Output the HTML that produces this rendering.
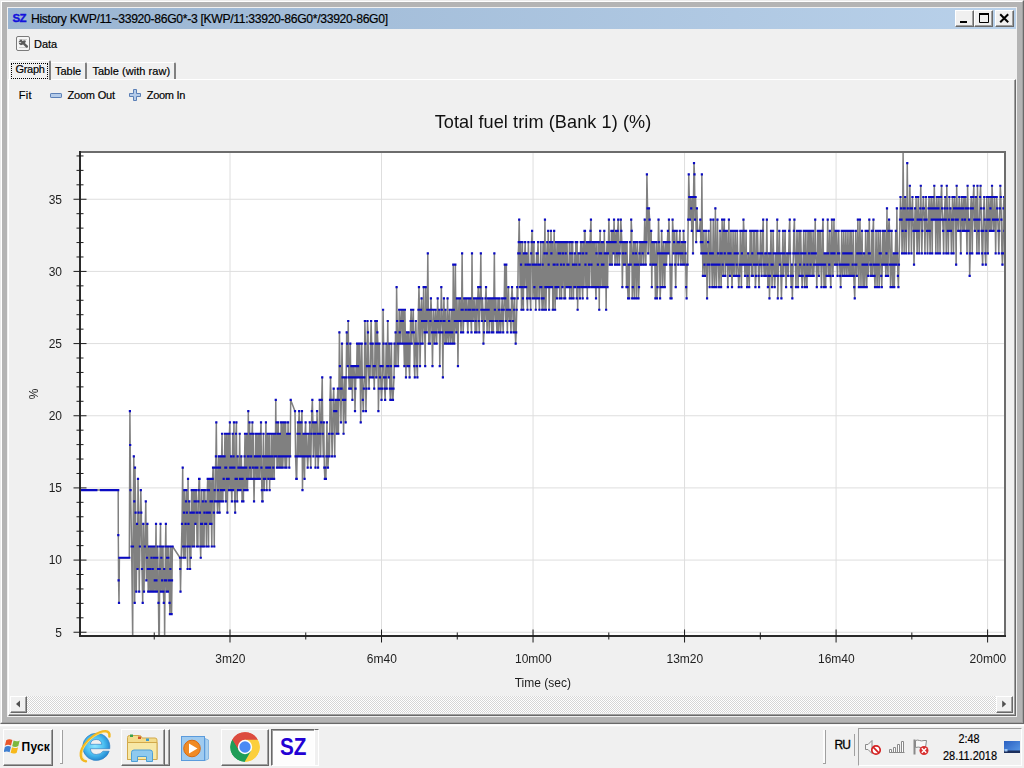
<!DOCTYPE html>
<html lang="en"><head><meta charset="utf-8"><title>History KWP</title>
<style>
html,body{margin:0;padding:0}
body{width:1024px;height:768px;overflow:hidden;background:#f0f0f0;position:relative;font-family:"Liberation Sans",sans-serif;font-size:11px;color:#000}
.abs{position:absolute}
.t{position:absolute;white-space:nowrap;line-height:14px;height:14px;-webkit-text-stroke:0.18px #000}
.raised{position:absolute;box-sizing:border-box;background:#f0f0f0;border:1px solid;border-color:#fff #696969 #696969 #fff;box-shadow:inset -1px -1px 0 #a0a0a0}
.sunken{position:absolute;box-sizing:border-box;border:1px solid;border-color:#a0a0a0 #fff #fff #a0a0a0}
.dither{background-color:#fff;background-image:conic-gradient(#fff 25%,#d6d6d6 0 50%,#fff 0 75%,#d6d6d6 0);background-size:2px 2px}
</style></head><body>
<div class="abs" style="left:0;top:0;width:1024px;height:724px;box-sizing:border-box;border:1px solid;border-color:#ececec #696969 #696969 #ececec;background:#b4b4b4"></div>
<div class="abs" style="left:1px;top:1px;width:1022px;height:722px;box-sizing:border-box;border:1px solid;border-color:#fff #a0a0a0 #a0a0a0 #fff"></div>
<div class="abs" style="left:7px;top:7px;width:1010px;height:710px;background:#f0f0f0"></div>
<div class="abs" style="left:8px;top:8px;width:1008px;height:21px;background:linear-gradient(90deg,#99b4d1,#b9d1ea)"></div>
<div class="t" style="left:12.5px;top:10.5px;font-size:11.5px;font-weight:bold;color:#1212dc;letter-spacing:-0.6px;-webkit-text-stroke:0.35px #1212dc">SZ</div>
<div class="t" style="left:31px;top:11.6px;font-size:12.2px;letter-spacing:-0.33px;color:#000">History KWP/11~33920-86G0*-3 [KWP/11:33920-86G0*/33920-86G0]</div>
<div class="raised" style="left:955px;top:10px;width:19px;height:17px"></div>
<div class="raised" style="left:974px;top:10px;width:19px;height:17px"></div>
<div class="raised" style="left:995px;top:10px;width:19px;height:17px"></div>
<svg class="abs" style="left:955px;top:10px" width="60" height="17" viewBox="0 0 60 17"><rect x="5" y="11" width="7" height="2" fill="#000"/><path d="M24.5 4.5h9v8h-9z" fill="none" stroke="#000"/><rect x="24" y="3" width="10" height="2" fill="#000"/><path d="M45.2 4.2l8 8M53.2 4.2l-8 8" stroke="#000" stroke-width="2" fill="none"/></svg>
<svg class="abs" style="left:15px;top:35px" width="16" height="17" viewBox="0 0 16 17"><rect x="1.5" y="1.5" width="13" height="14" rx="1.5" fill="#f6f6f6" stroke="#7a7a7a"/><path d="M4 4.5h8M4 12.500h8" stroke="#cfcfcf"/><path d="M3.500 6.800l2.200-2.300 1.200.2.300 1.300 1.500-.6 1.600-.2.600 1.600-1 1.300 3.200 3-.3 1.400-1.500.3-3.200-3.200-2.200.6-1.800-1.200-.400-1.700 1.800 1 1-.9z" fill="#5c5c5c"/></svg>
<div class="t" style="left:34px;top:37px;font-size:11px;letter-spacing:-0.05px">Data</div>
<div class="abs" style="left:8px;top:79px;width:1008px;height:637px;box-sizing:border-box;border:1px solid;border-color:#fff #696969 #696969 #fff;box-shadow:inset -1px -1px 0 #a0a0a0"></div>
<div class="abs" style="left:9px;top:60px;width:42px;height:20px;box-sizing:border-box;background:#f0f0f0;border-top:1px solid #fff;border-left:1px solid #fff;border-right:2px solid #808080;border-radius:2px 2px 0 0"></div>
<div class="abs" style="left:11px;top:63px;width:37px;height:16px;box-sizing:border-box;border:1px dotted #000"></div>
<div class="abs" style="left:51px;top:62px;width:36px;height:17px;box-sizing:border-box;border-top:1px solid #fff;border-right:2px solid #808080;border-radius:0 2px 0 0"></div>
<div class="abs" style="left:87px;top:62px;width:89px;height:17px;box-sizing:border-box;border-top:1px solid #fff;border-right:2px solid #808080;border-radius:0 2px 0 0"></div>
<div class="t" style="left:15.6px;top:61.9px;font-size:11px;letter-spacing:-0.35px">Graph</div>
<div class="t" style="left:55px;top:63.9px;font-size:11px;letter-spacing:-0.02px">Table</div>
<div class="t" style="left:92.4px;top:63.9px;font-size:11px;letter-spacing:0.05px">Table (with raw)</div>
<div class="t" style="left:18.8px;top:87.9px;font-size:11px;letter-spacing:0.3px">Fit</div>
<svg class="abs" style="left:49px;top:88px" width="14" height="14" viewBox="0 0 14 14"><rect x="1.5" y="5.5" width="11" height="4" rx=".6" fill="#b4cbe9" stroke="#5b7fb6"/></svg>
<div class="t" style="left:67.5px;top:87.9px;font-size:11px;letter-spacing:-0.2px">Zoom Out</div>
<svg class="abs" style="left:128px;top:88px" width="14" height="14" viewBox="0 0 14 14"><path d="M5.5 1.5h3v4h4v3h-4v4h-3v-4h-4v-3h4z" fill="#b4cbe9" stroke="#5b7fb6" stroke-linejoin="round"/></svg>
<div class="t" style="left:146.8px;top:87.9px;font-size:11px;letter-spacing:-0.3px">Zoom In</div>
<svg class="abs" style="left:0;top:0;will-change:transform" width="1024" height="724" viewBox="0 0 1024 724" font-family="'Liberation Sans', sans-serif">
<rect x="81" y="153" width="923" height="482" fill="#fff"/>
<path d="M81 632.24H1004M81 560.08H1004M81 487.91H1004M81 415.75H1004M81 343.58H1004M81 271.41H1004M81 199.25H1004M230 153V635M381.52 153V635M533.04 153V635M684.56 153V635M836.08 153V635M987.6 153V635" stroke="#dedede" stroke-width="1" fill="none"/>
<clipPath id="pc"><rect x="81" y="151" width="925" height="484.5"/></clipPath>
<g clip-path="url(#pc)"><path d="M80.4 490.11L81.16 490.11L81.92 490.11L82.68 490.11L83.44 490.11L84.2 490.11L84.96 490.11L85.72 490.11L86.48 490.11L87.24 490.11L88 490.11L88.76 490.11L89.52 490.11L90.28 490.11L91.04 490.11L91.8 490.11L92.56 490.11L93.32 490.11L94.08 490.11L94.84 490.11L95.6 490.11L96.36 490.11L100.92 490.11L101.68 490.11L102.44 490.11L103.2 490.11L103.96 490.11L104.72 490.11L105.48 490.11L106.24 490.11L107 490.11L107.76 490.11L108.52 490.11L109.28 490.11L110.04 490.11L110.8 490.11L111.56 490.11L112.32 490.11L113.08 490.11L113.84 490.11L114.6 490.11L115.36 490.11L116.12 490.11L116.88 490.11L117.64 490.11L118.2 490.11L118.3 535.2L118.6 580.3L119 602.84L119.4 557.75L120.2 557.75L120.96 557.75L121.72 557.75L122.48 557.75L123.24 557.75L124 557.75L124.76 557.75L125.52 557.75L126.28 557.75L127.04 557.75L127.8 557.75L128.56 557.75L129.32 557.75L129.9 411.2L130.2 445.02L130.6 490.11L131.6 546.48L132.7 640L133 546.48L133.8 456.29L134.3 501.39L134.7 602.84L135 467.57L135.6 512.66L136.3 591.57L137 523.93L137.5 569.02L138 478.84L138.6 512.66L139.2 591.57L139.9 546.48L140.8 490.11L141.3 512.66L142 569.02L142.7 602.84L143.3 523.93L144 591.57L144.8 546.48L145.8 501.39L146.4 580.3L147 557.75L147.41 523.93L147.82 569.02L148.23 591.57L148.64 569.02L149.05 546.48L149.46 569.02L149.87 591.57L150.28 569.02L150.69 546.48L151.1 591.57L151.51 557.75L151.92 546.48L152.33 591.57L152.74 569.02L153.15 546.48L153.56 591.57L153.97 557.75L154.38 546.48L154.79 580.3L155.2 591.57L155.61 557.75L156.02 523.93L156.43 580.3L156.84 591.57L157.25 557.75L157.66 546.48L158.07 569.02L158.48 602.84L158.89 640L159.3 640L159.71 569.02L160.12 546.48L160.53 523.93L160.94 591.57L161.35 557.75L161.76 546.48L162.17 580.3L162.58 591.57L162.99 546.48L163.4 591.57L163.81 602.84L164.22 569.02L164.63 640L165.04 580.3L165.45 546.48L165.86 523.93L166.27 580.3L166.68 591.57L167.09 557.75L167.5 546.48L167.91 591.57L168.32 557.75L168.73 546.48L169.14 580.3L169.55 602.84L169.96 614.12L170.37 569.02L170.78 546.48L171.19 580.3L171.6 614.12L172.01 580.3L172.42 546.48L172.6 546.48L180 557.75L180.2 569.02L180.5 591.57L181.2 557.75L182 523.93L182.7 467.57L183.11 546.48L183.52 557.75L183.93 512.66L184.34 490.11L184.75 546.48L185.16 557.75L185.57 523.93L185.98 501.39L186.39 490.11L186.8 512.66L187.21 546.48L187.62 569.02L188.03 478.84L188.44 523.93L188.85 546.48L189.26 501.39L189.67 546.48L190.08 569.02L190.49 512.66L190.9 557.75L191.31 512.66L191.72 490.11L192.13 512.66L192.54 546.48L192.95 512.66L193.36 490.11L193.77 512.66L194.18 546.48L194.59 501.39L195 490.11L195.41 523.93L195.82 501.39L196.23 490.11L196.64 512.66L197.05 546.48L197.46 512.66L197.87 546.48L198.28 501.39L198.69 490.11L199.1 478.84L199.51 478.84L199.92 512.66L200.33 546.48L200.74 557.75L201.15 523.93L201.56 490.11L201.97 523.93L202.38 546.48L202.79 501.39L203.2 546.48L203.61 490.11L204.02 546.48L204.43 512.66L204.84 490.11L205.25 523.93L205.66 501.39L206.07 523.93L206.48 546.48L206.89 512.66L207.3 490.11L207.71 478.84L208.12 512.66L208.53 546.48L208.94 490.11L209.35 478.84L209.76 512.66L210.17 523.93L210.58 501.39L210.99 478.84L211.4 523.93L211.81 546.48L212.22 501.39L212.63 478.84L213.04 467.57L213.45 467.57L213.86 512.66L214.27 546.48L214.68 490.11L215.09 501.39L215.5 467.57L215.91 456.29L216.32 422.47L216.73 467.57L217.14 501.39L217.55 512.66L217.96 490.11L218.37 467.57L218.78 456.29L219.19 501.39L219.6 512.66L220.01 467.57L220.42 456.29L220.83 490.11L221.24 501.39L221.65 456.29L222.06 433.75L222.47 490.11L222.88 501.39L223.29 456.29L223.7 478.84L224.11 490.11L224.52 456.29L224.93 433.75L225.34 467.57L225.75 501.39L226.16 467.57L226.57 433.75L226.98 478.84L227.39 512.66L227.8 478.84L228.21 433.75L228.62 478.84L229.03 490.11L229.44 433.75L229.85 422.47L230.26 467.57L230.67 490.11L231.08 456.29L231.49 490.11L231.9 501.39L232.31 467.57L232.72 433.75L233.13 490.11L233.54 456.29L233.95 422.47L234.36 467.57L234.77 501.39L235.18 512.66L235.59 478.84L236 433.75L236.41 422.47L236.82 478.84L237.23 501.39L237.64 456.29L238.05 490.11L238.46 467.57L238.87 490.11L239.28 467.57L239.69 433.75L240.1 478.84L240.51 490.11L240.92 467.57L241.33 456.29L241.74 478.84L242.15 501.39L242.56 478.84L242.97 467.57L243.38 501.39L243.79 467.57L244.2 490.11L244.61 456.29L245.02 433.75L245.43 467.57L245.84 490.11L246.25 467.57L246.66 433.75L247.07 478.84L247.48 490.11L247.89 456.29L248.3 411.2L248.71 456.29L249.12 478.84L249.53 422.47L249.94 467.57L250.35 433.75L250.76 478.84L251.17 456.29L251.58 478.84L251.99 433.75L252.4 422.47L252.81 467.57L253.22 433.75L253.63 478.84L254.04 501.39L254.45 478.84L254.86 456.29L255.27 467.57L255.68 433.75L256.09 478.84L256.5 456.29L256.91 433.75L257.32 467.57L257.73 478.84L258.14 456.29L258.55 433.75L258.96 478.84L259.37 433.75L259.78 478.84L260.19 456.29L260.6 433.75L261.01 422.47L261.42 467.57L261.83 490.11L262.24 501.39L262.65 501.39L263.06 456.29L263.47 433.75L263.88 478.84L264.29 490.11L264.7 456.29L265.11 478.84L265.52 456.29L265.93 422.47L266.34 467.57L266.75 490.11L267.16 456.29L267.57 433.75L267.98 467.57L268.39 478.84L268.8 456.29L269.21 433.75L269.62 490.11L270.03 467.57L270.44 456.29L270.85 478.84L271.26 433.75L271.67 478.84L272.08 456.29L272.49 478.84L272.9 433.75L273.31 467.57L273.72 433.75L274.13 478.84L274.54 456.29L274.95 433.75L275.36 456.29L275.77 399.93L276.18 456.29L276.59 422.47L277 467.57L277.41 433.75L277.82 467.57L278.23 422.47L278.64 456.29L279.05 433.75L279.46 467.57L279.87 433.75L280.28 456.29L280.69 467.57L281.1 422.47L281.51 467.57L281.92 422.47L282.33 456.29L282.74 467.57L283.15 456.29L283.56 422.47L283.97 456.29L284.38 422.47L284.79 456.29L285.2 467.57L285.61 422.47L286.02 456.29L286.43 467.57L286.84 456.29L287.25 433.75L287.66 456.29L288.07 422.47L288.48 456.29L288.89 433.75L289.3 467.57L289.71 433.75L290.2 456.29L290.7 399.93L295 411.2L295.6 456.29L296.3 478.84L296.71 478.84L297.12 456.29L297.53 433.75L297.94 422.47L298.35 456.29L298.76 422.47L299.17 411.2L299.58 433.75L299.99 456.29L300.4 422.47L300.92 456.29L301.44 422.47L301.96 411.2L302.48 490.11L303 456.29L303.52 433.75L304.04 456.29L304.56 478.84L305.08 433.75L305.6 422.47L306.12 456.29L306.64 433.75L307.16 456.29L307.68 467.57L308.2 456.29L308.72 433.75L309.24 456.29L309.76 422.47L310.28 456.29L310.8 467.57L311.32 433.75L311.84 411.2L312.36 399.93L312.88 422.47L313.4 456.29L313.92 433.75L314.44 422.47L314.96 433.75L315.48 467.57L316 422.47L316.52 456.29L317.04 411.2L317.56 433.75L318.08 467.57L318.6 456.29L319.12 433.75L319.64 399.93L320.16 433.75L320.68 456.29L321.2 422.47L321.72 399.93L322.24 377.38L322.76 433.75L323.28 456.29L323.8 422.47L324.32 467.57L324.84 478.84L325.36 467.57L325.88 478.84L326.4 456.29L326.92 422.47L327.44 456.29L327.96 467.57L328.48 456.29L329 433.75L329.52 456.29L330.04 399.93L330.56 377.38L331.08 399.93L331.6 433.75L332.12 456.29L332.64 433.75L333.16 399.93L333.68 388.66L334.2 411.2L334.72 456.29L335.24 411.2L335.76 399.93L336.28 411.2L336.8 433.75L337.32 399.93L337.84 388.66L338.36 433.75L338.88 399.93L339.4 332.29L339.92 366.11L340.44 388.66L340.96 422.47L341.48 388.66L342 343.56L342.52 377.38L343.04 399.93L343.56 433.75L344.08 399.93L344.6 377.38L345.12 399.93L345.64 422.47L346.16 377.38L346.68 332.29L347.2 343.56L347.72 366.11L348.24 321.02L348.76 377.38L349.28 388.66L349.8 377.38L350.32 343.56L350.84 388.66L351.36 366.11L351.88 377.38L352.4 399.93L352.92 366.11L353.44 377.38L353.96 366.11L354.48 377.38L355 411.2L355.52 388.66L356.04 366.11L356.56 377.38L357.08 343.56L357.6 377.38L358.12 366.11L358.64 343.56L359.16 377.38L359.68 343.56L360.2 377.38L360.72 422.47L361.24 377.38L361.76 343.56L362.28 377.38L362.8 399.93L363.32 411.2L363.84 388.66L364.36 377.38L364.88 321.02L365.4 343.56L365.92 411.2L366.44 388.66L366.96 366.11L367.48 321.02L368 332.29L368.52 366.11L369.04 388.66L369.56 366.11L370.08 377.38L370.6 343.56L371.12 321.02L371.64 343.56L372.16 377.38L372.68 343.56L373.2 377.38L373.72 366.11L374.24 388.66L374.76 366.11L375.28 321.02L375.8 343.56L376.32 377.38L376.84 321.02L377.36 332.29L377.88 343.56L378.4 411.2L378.92 388.66L379.44 343.56L379.96 377.38L380.48 366.11L381 388.66L381.52 399.93L382.04 388.66L382.56 366.11L383.08 309.74L383.6 343.56L384.12 377.38L384.64 388.66L385.16 399.93L385.68 377.38L386.2 343.56L386.72 388.66L387.24 366.11L387.76 321.02L388.28 366.11L388.8 377.38L389.32 343.56L389.84 388.66L390.36 399.93L390.88 366.11L391.4 343.56L391.92 388.66L392.44 399.93L392.96 399.93L393.48 388.66L394 377.38L394.52 343.56L395.04 366.11L395.56 332.29L396.08 366.11L396.6 287.2L397.12 321.02L397.64 343.56L398.16 366.11L398.68 343.56L399.2 309.74L399.72 332.29L400.24 343.56L400.76 321.02L401.28 309.74L401.8 309.74L402.32 343.56L402.84 321.02L403.36 309.74L403.88 343.56L404.4 366.11L404.92 309.74L405.44 343.56L405.96 377.38L406.48 343.56L407 332.29L407.52 366.11L408.04 343.56L408.56 332.29L409.08 366.11L409.6 377.38L410.12 343.56L410.64 321.02L411.16 309.74L411.68 343.56L412.2 332.29L412.72 321.02L413.24 309.74L413.76 332.29L414.28 366.11L414.8 377.38L415.32 343.56L415.84 321.02L416.36 343.56L416.88 366.11L417.4 377.38L417.92 343.56L418.44 309.74L418.96 287.2L419.48 309.74L420 366.11L420.52 343.56L421.04 309.74L421.56 298.47L422.08 321.02L422.6 343.56L423.12 321.02L423.64 287.2L424.16 321.02L424.68 332.29L425.2 366.11L425.72 287.2L426.24 321.02L426.76 332.29L427.28 309.74L427.8 253.38L428.32 309.74L428.84 343.56L429.36 309.74L429.88 343.56L430.4 321.02L430.92 298.47L431.44 309.74L431.96 332.29L432.48 366.11L433 332.29L433.52 309.74L434.04 332.29L434.56 343.56L435.08 321.02L435.6 309.74L436.12 332.29L436.64 343.56L437.16 321.02L437.68 298.47L438.2 321.02L438.72 332.29L439.24 309.74L439.76 366.11L440.28 332.29L440.8 321.02L441.32 287.2L441.84 309.74L442.36 332.29L442.88 377.38L443.4 321.02L443.92 298.47L444.44 321.02L444.96 343.56L445.48 309.74L446 332.29L446.52 343.56L447.04 332.29L447.56 298.47L448.08 332.29L448.6 343.56L449.12 321.02L449.64 309.74L450.16 332.29L450.68 343.56L451.2 332.29L451.72 309.74L452.24 332.29L452.76 343.56L453.28 264.65L453.8 309.74L454.32 343.56L454.84 321.02L455.36 264.65L455.88 321.02L456.4 332.29L456.92 298.47L457.44 321.02L457.96 366.11L458.48 321.02L459 298.47L459.52 321.02L460.04 298.47L460.56 321.02L461.08 332.29L461.6 309.74L462.12 253.38L462.64 309.74L463.16 332.29L463.68 321.02L464.2 298.47L464.72 321.02L465.24 298.47L465.76 309.74L466.28 321.02L466.8 298.47L467.32 321.02L467.84 332.29L468.36 309.74L468.88 298.47L469.4 321.02L469.92 309.74L470.44 298.47L470.96 321.02L471.48 332.29L472 253.38L472.52 309.74L473.04 321.02L473.56 309.74L474.08 298.47L474.6 309.74L475.12 332.29L475.64 321.02L476.16 298.47L476.68 332.29L477.2 309.74L477.72 298.47L478.24 287.2L478.76 321.02L479.28 332.29L479.8 298.47L480.32 287.2L480.84 253.38L481.36 309.74L481.88 321.02L482.4 298.47L482.92 309.74L483.44 343.56L483.96 332.29L484.48 309.74L485 321.02L485.52 298.47L486.04 287.2L486.56 309.74L487.08 332.29L487.6 309.74L488.12 298.47L488.64 309.74L489.16 332.29L489.68 298.47L490.2 321.02L490.72 298.47L491.24 321.02L491.76 332.29L492.28 298.47L492.8 321.02L493.32 332.29L493.84 298.47L494.36 253.38L494.88 309.74L495.4 321.02L495.92 298.47L496.44 321.02L496.96 332.29L497.48 321.02L498 298.47L498.52 332.29L499.04 309.74L499.56 298.47L500.08 321.02L500.6 332.29L501.12 321.02L501.64 309.74L502.16 298.47L502.68 321.02L503.2 332.29L503.72 309.74L504.24 298.47L504.76 264.65L505.28 298.47L505.8 321.02L506.32 264.65L506.84 309.74L507.36 332.29L507.88 309.74L508.4 287.2L508.92 309.74L509.44 321.02L509.96 309.74L510.48 321.02L511 332.29L511.52 298.47L512.04 287.2L512.56 298.47L513.08 321.02L513.6 332.29L514.12 309.74L514.64 298.47L515.16 332.29L515.68 343.56L516.2 332.29L516.72 309.74L517.24 287.2L517.76 298.47L518.28 253.38L518.74 242.11L519.2 219.56L519.66 253.38L520.12 287.2L520.58 242.11L521.04 264.65L521.5 309.74L521.96 287.2L522.42 242.11L522.88 298.47L523.34 309.74L523.8 253.38L524.26 287.2L524.72 253.38L525.18 242.11L525.64 264.65L526.1 287.2L526.56 253.38L527.02 298.47L527.48 309.74L527.94 264.65L528.4 242.11L528.86 264.65L529.32 298.47L529.78 264.65L530.24 298.47L530.7 309.74L531.16 253.38L531.62 242.11L532.08 230.83L532.54 264.65L533 298.47L533.46 264.65L533.92 242.11L534.38 287.2L534.84 298.47L535.3 264.65L535.76 309.74L536.22 264.65L536.68 253.38L537.14 298.47L537.6 253.38L538.06 242.11L538.52 264.65L538.98 298.47L539.44 309.74L539.9 264.65L540.36 287.2L540.82 242.11L541.28 287.2L541.74 298.47L542.2 309.74L542.66 264.65L543.12 242.11L543.58 298.47L544.04 309.74L544.5 253.38L544.96 219.56L545.42 287.2L545.88 309.74L546.34 287.2L546.8 253.38L547.26 242.11L547.72 287.2L548.18 230.83L548.64 264.65L549.1 309.74L549.56 287.2L550.02 242.11L550.48 287.2L550.94 230.83L551.4 253.38L551.86 287.2L552.32 242.11L552.78 309.74L553.24 309.74L553.7 264.65L554.16 230.83L554.62 264.65L555.08 309.74L555.54 287.2L556 242.11L556.46 287.2L556.92 298.47L557.38 264.65L557.84 242.11L558.3 287.2L558.76 253.38L559.22 242.11L559.68 298.47L560.14 253.38L560.6 242.11L561.06 264.65L561.52 298.47L561.98 242.11L562.44 287.2L562.9 253.38L563.36 242.11L563.82 264.65L564.28 298.47L564.74 242.11L565.2 298.47L565.66 253.38L566.12 242.11L566.58 287.2L567.04 242.11L567.5 264.65L567.96 287.2L568.42 264.65L568.88 287.2L569.34 242.11L569.8 298.47L570.26 253.38L570.72 287.2L571.18 242.11L571.64 298.47L572.1 253.38L572.56 242.11L573.02 264.65L573.48 298.47L573.94 264.65L574.4 287.2L574.86 253.38L575.32 287.2L575.78 242.11L576.24 264.65L576.7 298.47L577.16 242.11L577.62 309.74L578.08 287.2L578.54 253.38L579 287.2L579.46 264.65L579.92 298.47L580.38 253.38L580.84 242.11L581.3 287.2L581.76 242.11L582.22 287.2L582.68 298.47L583.14 253.38L583.6 242.11L584.06 287.2L584.52 230.83L584.98 230.83L585.44 264.65L585.9 287.2L586.36 253.38L586.82 242.11L587.28 298.47L587.74 242.11L588.2 287.2L588.66 242.11L589.12 264.65L589.58 287.2L590.04 242.11L590.5 230.83L590.96 219.56L591.42 264.65L591.88 287.2L592.34 242.11L592.8 287.2L593.26 242.11L593.72 287.2L594.18 242.11L594.64 287.2L595.1 242.11L595.56 287.2L596.02 298.47L596.48 253.38L596.94 242.11L597.4 287.2L597.86 264.65L598.32 287.2L598.78 242.11L599.24 309.74L599.7 253.38L600.16 230.83L600.62 287.2L601.08 253.38L601.54 242.11L602 264.65L602.46 287.2L602.92 242.11L603.38 264.65L603.84 287.2L604.3 230.83L604.76 253.38L605.22 287.2L605.68 253.38L606.14 309.74L606.6 253.38L607.06 242.11L607.52 287.2L607.98 253.38L608.44 242.11L608.9 219.56L609.36 242.11L609.88 264.65L610.4 242.11L610.92 264.65L611.44 230.83L611.96 264.65L612.48 242.11L613 230.83L613.52 253.38L614.04 219.56L614.56 242.11L615.08 264.65L615.6 242.11L616.12 230.83L616.64 253.38L617.16 264.65L617.68 230.83L618.2 219.56L618.72 253.38L619.24 264.65L619.76 253.38L620.28 242.11L620.8 219.56L621.32 230.83L621.84 242.11L622.36 287.2L622.88 253.38L623.4 242.11L623.92 264.65L624.44 242.11L624.96 264.65L625.48 253.38L626 242.11L626.52 287.2L627.04 242.11L627.56 287.2L628.08 298.47L628.6 264.65L629.12 298.47L629.64 264.65L630.16 242.11L630.68 264.65L631.2 219.56L631.72 230.83L632.24 298.47L632.76 287.2L633.28 253.38L633.8 242.11L634.32 298.47L634.84 264.65L635.36 242.11L635.88 253.38L636.4 298.47L636.92 264.65L637.44 242.11L637.96 264.65L638.48 298.47L639 287.2L639.52 253.38L640.04 242.11L640.56 264.65L641.08 242.11L641.6 264.65L642.12 242.11L642.64 253.38L643.16 242.11L643.68 264.65L644.2 242.11L644.72 219.56L645.24 242.11L645.76 264.65L646.3 242.11L646.9 174.47L647.6 208.29L648.2 253.38L649 208.29L649.6 219.56L650.4 264.65L651.2 230.83L651.8 287.2L652.3 242.11L652.82 264.65L653.34 242.11L653.86 264.65L654.38 242.11L654.9 264.65L655.42 298.47L655.94 264.65L656.46 242.11L656.98 298.47L657.5 287.2L658.02 253.38L658.54 219.56L659.06 242.11L659.58 253.38L660.1 298.47L660.62 287.2L661.14 253.38L661.66 230.83L662.18 253.38L662.7 287.2L663.22 253.38L663.74 242.11L664.26 264.65L664.78 287.2L665.3 253.38L665.82 242.11L666.34 264.65L666.86 253.38L667.38 242.11L667.9 230.83L668.42 253.38L668.94 219.56L669.46 242.11L669.98 264.65L670.5 298.47L671.02 264.65L671.54 298.47L672.06 264.65L672.58 219.56L673.1 230.83L673.62 253.38L674.14 242.11L674.66 230.83L675.18 264.65L675.7 287.2L676.22 253.38L676.74 230.83L677.26 253.38L677.78 242.11L678.3 264.65L678.82 253.38L679.34 242.11L679.86 230.83L680.38 253.38L680.9 264.65L681.42 253.38L681.94 242.11L682.46 253.38L682.98 264.65L683.5 230.83L684.02 242.11L684.54 264.65L685.06 242.11L685.58 253.38L686.1 287.2L686.62 298.47L687.14 264.65L687.6 264.65L688.2 219.56L688.75 174.47L689.3 197.01L689.9 219.56L690.6 197.01L691.2 208.29L691.8 230.83L692.4 197.01L693 253.38L693.5 197.01L694 163.2L694.5 174.47L695 219.56L695.6 197.01L696.2 242.11L696.9 208.29L697.6 230.83L698.3 230.83L699 230.83L699.5 230.83L700.3 219.56L700.82 242.11L701.34 253.38L701.86 174.47L702.38 242.11L702.9 275.93L703.42 253.38L703.94 230.83L704.46 264.65L704.98 275.93L705.5 253.38L706.02 230.83L706.54 253.38L707.06 298.47L707.58 264.65L708.1 242.11L708.62 230.83L709.14 264.65L709.66 287.2L710.18 253.38L710.7 219.56L711.22 253.38L711.74 264.65L712.26 287.2L712.78 253.38L713.3 219.56L713.82 264.65L714.34 287.2L714.86 264.65L715.38 208.29L715.9 264.65L716.42 287.2L716.94 264.65L717.46 219.56L717.98 253.38L718.5 264.65L719.02 287.2L719.54 264.65L720.06 230.83L720.58 253.38L721.1 287.2L721.62 253.38L722.14 219.56L722.66 264.65L723.18 275.93L723.7 230.83L724.22 219.56L724.74 253.38L725.26 275.93L725.78 230.83L726.3 264.65L726.82 230.83L727.34 264.65L727.86 287.2L728.38 253.38L728.9 219.56L729.42 264.65L729.94 275.93L730.46 253.38L730.98 230.83L731.5 264.65L732.02 287.2L732.54 264.65L733.06 230.83L733.58 264.65L734.1 275.93L734.62 253.38L735.14 230.83L735.66 253.38L736.18 275.93L736.7 264.65L737.22 230.83L737.74 253.38L738.26 275.93L738.78 287.2L739.3 275.93L739.82 264.65L740.34 230.83L740.86 264.65L741.38 287.2L741.9 253.38L742.42 230.83L742.94 264.65L743.46 219.56L743.98 230.83L744.5 264.65L745.02 275.93L745.54 264.65L746.06 230.83L746.58 264.65L747.1 287.2L747.62 275.93L748.14 253.38L748.66 264.65L749.18 287.2L749.7 264.65L750.22 230.83L750.74 264.65L751.26 230.83L751.78 275.93L752.3 253.38L752.82 275.93L753.34 230.83L753.86 264.65L754.38 230.83L754.9 264.65L755.42 287.2L755.94 275.93L756.46 230.83L756.98 264.65L757.5 230.83L758.02 253.38L758.54 275.93L759.06 287.2L759.58 264.65L760.1 253.38L760.62 230.83L761.14 264.65L761.66 275.93L762.18 253.38L762.7 230.83L763.22 219.56L763.74 264.65L764.26 275.93L764.78 264.65L765.3 253.38L765.82 275.93L766.34 253.38L766.86 219.56L767.38 264.65L767.9 287.2L768.42 275.93L768.94 253.38L769.46 298.47L769.98 275.93L770.5 253.38L771.02 230.83L771.54 264.65L772.06 287.2L772.58 264.65L773.1 230.83L773.62 253.38L774.14 275.93L774.66 287.2L775.18 275.93L775.7 253.38L776.22 275.93L776.74 253.38L777.26 219.56L777.78 298.47L778.3 275.93L778.82 253.38L779.34 230.83L779.86 264.65L780.38 253.38L780.9 275.93L781.42 298.47L781.94 275.93L782.46 253.38L782.98 230.83L783.5 275.93L784.02 264.65L784.54 253.38L785.06 230.83L785.58 264.65L786.1 287.2L786.62 264.65L787.14 253.38L787.66 264.65L788.18 275.93L788.7 253.38L789.22 230.83L789.74 219.56L790.26 253.38L790.78 275.93L791.3 287.2L791.82 264.65L792.34 298.47L792.86 275.93L793.38 253.38L793.9 230.83L794.42 219.56L794.94 253.38L795.46 264.65L795.98 287.2L796.5 253.38L797.02 230.83L797.54 253.38L798.06 287.2L798.58 253.38L799.1 230.83L799.62 275.93L800.14 264.65L800.66 230.83L801.18 253.38L801.7 275.93L802.22 287.2L802.74 275.93L803.26 253.38L803.78 230.83L804.3 264.65L804.82 287.2L805.34 253.38L805.86 230.83L806.38 275.93L806.9 287.2L807.42 264.65L807.94 230.83L808.46 275.93L808.98 253.38L809.5 230.83L810.02 275.93L810.54 264.65L811.06 230.83L811.58 253.38L812.1 275.93L812.62 253.38L813.14 230.83L813.66 275.93L814.18 264.65L814.7 253.38L815.22 219.56L815.74 253.38L816.26 264.65L816.78 287.2L817.3 264.65L817.82 230.83L818.34 264.65L818.86 275.93L819.38 230.83L819.9 264.65L820.42 230.83L820.94 264.65L821.46 287.2L821.98 264.65L822.5 230.83L823.02 219.56L823.54 264.65L824.06 287.2L824.58 253.38L825.1 264.65L825.62 287.2L826.14 253.38L826.66 275.93L827.18 253.38L827.7 219.56L828.22 253.38L828.74 275.93L829.26 264.65L829.78 230.83L830.3 275.93L830.82 287.2L831.34 253.38L831.86 219.56L832.38 253.38L832.9 275.93L833.42 253.38L833.94 219.56L834.46 253.38L834.98 264.65L835.5 230.83L836.02 264.65L836.54 230.83L837.06 264.65L837.58 275.93L838.1 253.38L838.62 230.83L839.14 253.38L839.66 264.65L840.18 275.93L840.7 287.2L841.22 264.65L841.74 230.83L842.26 264.65L842.78 275.93L843.3 253.38L843.82 230.83L844.34 264.65L844.86 275.93L845.38 253.38L845.9 230.83L846.42 264.65L846.94 275.93L847.46 253.38L847.98 230.83L848.5 264.65L849.02 275.93L849.54 253.38L850.06 230.83L850.58 275.93L851.1 230.83L851.62 253.38L852.14 275.93L852.66 264.65L853.18 230.83L853.7 275.93L854.22 287.2L854.74 298.47L855.26 264.65L855.78 230.83L856.3 264.65L856.82 275.93L857.34 253.38L857.86 219.56L858.38 253.38L858.9 287.2L859.42 253.38L859.94 219.56L860.46 253.38L860.98 287.2L861.5 253.38L862.02 230.83L862.54 264.65L863.06 287.2L863.58 264.65L864.1 253.38L864.62 287.2L865.14 264.65L865.66 230.83L866.18 264.65L866.7 287.2L867.22 264.65L867.74 230.83L868.26 275.93L868.78 253.38L869.3 219.56L869.82 253.38L870.34 264.65L870.86 275.93L871.38 264.65L871.9 230.83L872.42 275.93L872.94 230.83L873.46 219.56L873.98 264.65L874.5 275.93L875.02 287.2L875.54 264.65L876.06 230.83L876.58 264.65L877.1 287.2L877.62 264.65L878.14 230.83L878.66 264.65L879.18 287.2L879.7 253.38L880.22 230.83L880.74 253.38L881.26 275.93L881.78 287.2L882.3 264.65L882.82 230.83L883.34 264.65L883.86 230.83L884.38 264.65L884.9 230.83L885.42 264.65L885.94 275.93L886.46 253.38L886.98 208.29L887.5 264.65L888.02 275.93L888.54 230.83L889.06 219.56L889.58 230.83L890.1 264.65L890.62 287.2L891.14 264.65L891.66 230.83L892.18 264.65L892.7 287.2L893.22 264.65L893.74 253.38L894.26 287.2L894.78 264.65L895.3 253.38L895.82 230.83L896.34 264.65L896.86 208.29L897.38 253.38L897.9 275.93L898.42 287.2L898.94 264.65L899.98 219.56L900.5 197.01L901.02 208.29L901.54 219.56L902.06 253.38L902.58 230.83L903.1 151.92L903.62 208.29L904.14 253.38L904.66 208.29L905.18 197.01L905.7 230.83L906.22 253.38L906.74 219.56L907.26 163.2L907.78 208.29L908.3 219.56L908.82 253.38L909.34 219.56L909.86 185.74L910.38 208.29L910.9 219.56L911.42 253.38L911.94 208.29L912.46 197.01L912.98 219.56L913.5 230.83L914.02 264.65L914.54 230.83L915.06 208.29L915.58 230.83L916.1 197.01L916.62 230.83L917.14 253.38L917.66 219.56L918.18 197.01L918.7 230.83L919.22 253.38L919.74 219.56L920.26 208.29L920.78 185.74L921.3 219.56L921.82 253.38L922.34 230.83L922.86 208.29L923.38 197.01L923.9 208.29L924.42 219.56L924.94 253.38L925.46 219.56L925.98 197.01L926.5 219.56L927.02 230.83L927.54 253.38L928.06 230.83L928.58 208.29L929.1 197.01L929.62 230.83L930.14 253.38L930.66 208.29L931.18 197.01L931.7 219.56L932.22 253.38L932.74 208.29L933.26 197.01L933.78 219.56L934.3 185.74L934.82 208.29L935.34 219.56L935.86 253.38L936.38 208.29L936.9 197.01L937.42 219.56L937.94 253.38L938.46 208.29L938.98 197.01L939.5 219.56L940.02 253.38L940.54 219.56L941.06 197.01L941.58 185.74L942.1 208.29L942.62 219.56L943.14 230.83L943.66 253.38L944.18 219.56L944.7 208.29L945.22 197.01L945.74 219.56L946.26 253.38L946.78 185.74L947.3 208.29L947.82 230.83L948.34 253.38L948.86 219.56L949.38 197.01L949.9 230.83L950.42 208.29L950.94 230.83L951.46 253.38L951.98 219.56L952.5 197.01L953.02 219.56L953.54 253.38L954.06 208.29L954.58 197.01L955.1 208.29L955.62 219.56L956.14 264.65L956.66 185.74L957.18 208.29L957.7 219.56L958.22 230.83L958.74 208.29L959.26 197.01L959.78 208.29L960.3 230.83L960.82 253.38L961.34 208.29L961.86 197.01L962.38 219.56L962.9 230.83L963.42 208.29L963.94 197.01L964.46 230.83L964.98 219.56L965.5 197.01L966.02 208.29L966.54 230.83L967.06 253.38L967.58 185.74L968.1 208.29L968.62 230.83L969.14 219.56L969.66 275.93L970.18 253.38L970.7 208.29L971.22 197.01L971.74 208.29L972.26 253.38L972.78 208.29L973.3 197.01L973.82 185.74L974.34 219.56L974.86 230.83L975.38 219.56L975.9 197.01L976.42 219.56L976.94 253.38L977.46 185.74L977.98 219.56L978.5 230.83L979.02 253.38L979.54 219.56L980.06 197.01L980.58 185.74L981.1 208.29L981.62 230.83L982.14 253.38L982.66 264.65L983.18 230.83L983.7 208.29L984.22 197.01L984.74 219.56L985.26 253.38L985.78 264.65L986.3 230.83L986.82 197.01L987.34 219.56L987.86 253.38L988.38 219.56L988.9 197.01L989.42 219.56L989.94 230.83L990.46 208.29L990.98 197.01L991.5 230.83L992.02 185.74L992.54 197.01L993.06 219.56L993.58 230.83L994.1 219.56L994.62 197.01L995.14 219.56L995.66 253.38L996.18 219.56L996.7 197.01L997.22 208.29L997.74 219.56L998.26 230.83L998.78 253.38L999.3 230.83L999.82 208.29L1000.34 185.74L1000.86 197.01L1001.38 219.56L1001.9 253.38L1002.42 264.65L1002.94 253.38L1003.46 208.29L1003.98 197.01L1004.5 230.83L1005.02 264.65" stroke="#808080" stroke-width="1.5" fill="none" stroke-linejoin="round"/>
<path d="M79.3 489.01h2.2v2.2h-2.2zM80.06 489.01h2.2v2.2h-2.2zM80.82 489.01h2.2v2.2h-2.2zM81.58 489.01h2.2v2.2h-2.2zM82.34 489.01h2.2v2.2h-2.2zM83.1 489.01h2.2v2.2h-2.2zM83.86 489.01h2.2v2.2h-2.2zM84.62 489.01h2.2v2.2h-2.2zM85.38 489.01h2.2v2.2h-2.2zM86.14 489.01h2.2v2.2h-2.2zM86.9 489.01h2.2v2.2h-2.2zM87.66 489.01h2.2v2.2h-2.2zM88.42 489.01h2.2v2.2h-2.2zM89.18 489.01h2.2v2.2h-2.2zM89.94 489.01h2.2v2.2h-2.2zM90.7 489.01h2.2v2.2h-2.2zM91.46 489.01h2.2v2.2h-2.2zM92.22 489.01h2.2v2.2h-2.2zM92.98 489.01h2.2v2.2h-2.2zM93.74 489.01h2.2v2.2h-2.2zM94.5 489.01h2.2v2.2h-2.2zM95.26 489.01h2.2v2.2h-2.2zM99.82 489.01h2.2v2.2h-2.2zM100.58 489.01h2.2v2.2h-2.2zM101.34 489.01h2.2v2.2h-2.2zM102.1 489.01h2.2v2.2h-2.2zM102.86 489.01h2.2v2.2h-2.2zM103.62 489.01h2.2v2.2h-2.2zM104.38 489.01h2.2v2.2h-2.2zM105.14 489.01h2.2v2.2h-2.2zM105.9 489.01h2.2v2.2h-2.2zM106.66 489.01h2.2v2.2h-2.2zM107.42 489.01h2.2v2.2h-2.2zM108.18 489.01h2.2v2.2h-2.2zM108.94 489.01h2.2v2.2h-2.2zM109.7 489.01h2.2v2.2h-2.2zM110.46 489.01h2.2v2.2h-2.2zM111.22 489.01h2.2v2.2h-2.2zM111.98 489.01h2.2v2.2h-2.2zM112.74 489.01h2.2v2.2h-2.2zM113.5 489.01h2.2v2.2h-2.2zM114.26 489.01h2.2v2.2h-2.2zM115.02 489.01h2.2v2.2h-2.2zM115.78 489.01h2.2v2.2h-2.2zM116.54 489.01h2.2v2.2h-2.2zM117.1 489.01h2.2v2.2h-2.2zM117.2 534.1h2.2v2.2h-2.2zM117.5 579.2h2.2v2.2h-2.2zM117.9 601.74h2.2v2.2h-2.2zM118.3 556.65h2.2v2.2h-2.2zM119.1 556.65h2.2v2.2h-2.2zM119.86 556.65h2.2v2.2h-2.2zM120.62 556.65h2.2v2.2h-2.2zM121.38 556.65h2.2v2.2h-2.2zM122.14 556.65h2.2v2.2h-2.2zM122.9 556.65h2.2v2.2h-2.2zM123.66 556.65h2.2v2.2h-2.2zM124.42 556.65h2.2v2.2h-2.2zM125.18 556.65h2.2v2.2h-2.2zM125.94 556.65h2.2v2.2h-2.2zM126.7 556.65h2.2v2.2h-2.2zM127.46 556.65h2.2v2.2h-2.2zM128.22 556.65h2.2v2.2h-2.2zM128.8 410.1h2.2v2.2h-2.2zM129.1 443.92h2.2v2.2h-2.2zM129.5 489.01h2.2v2.2h-2.2zM130.5 545.38h2.2v2.2h-2.2zM131.9 545.38h2.2v2.2h-2.2zM132.7 455.19h2.2v2.2h-2.2zM133.2 500.29h2.2v2.2h-2.2zM133.6 601.74h2.2v2.2h-2.2zM133.9 466.47h2.2v2.2h-2.2zM134.5 511.56h2.2v2.2h-2.2zM135.2 590.47h2.2v2.2h-2.2zM135.9 522.83h2.2v2.2h-2.2zM136.4 567.92h2.2v2.2h-2.2zM136.9 477.74h2.2v2.2h-2.2zM137.5 511.56h2.2v2.2h-2.2zM138.1 590.47h2.2v2.2h-2.2zM138.8 545.38h2.2v2.2h-2.2zM139.7 489.01h2.2v2.2h-2.2zM140.2 511.56h2.2v2.2h-2.2zM140.9 567.92h2.2v2.2h-2.2zM141.6 601.74h2.2v2.2h-2.2zM142.2 522.83h2.2v2.2h-2.2zM142.9 590.47h2.2v2.2h-2.2zM143.7 545.38h2.2v2.2h-2.2zM144.7 500.29h2.2v2.2h-2.2zM145.3 579.2h2.2v2.2h-2.2zM145.9 556.65h2.2v2.2h-2.2zM146.31 522.83h2.2v2.2h-2.2zM146.72 567.92h2.2v2.2h-2.2zM147.13 590.47h2.2v2.2h-2.2zM147.54 567.92h2.2v2.2h-2.2zM147.95 545.38h2.2v2.2h-2.2zM148.36 567.92h2.2v2.2h-2.2zM148.77 590.47h2.2v2.2h-2.2zM149.18 567.92h2.2v2.2h-2.2zM149.59 545.38h2.2v2.2h-2.2zM150 590.47h2.2v2.2h-2.2zM150.41 556.65h2.2v2.2h-2.2zM150.82 545.38h2.2v2.2h-2.2zM151.23 590.47h2.2v2.2h-2.2zM151.64 567.92h2.2v2.2h-2.2zM152.05 545.38h2.2v2.2h-2.2zM152.46 590.47h2.2v2.2h-2.2zM152.87 556.65h2.2v2.2h-2.2zM153.28 545.38h2.2v2.2h-2.2zM153.69 579.2h2.2v2.2h-2.2zM154.1 590.47h2.2v2.2h-2.2zM154.51 556.65h2.2v2.2h-2.2zM154.92 522.83h2.2v2.2h-2.2zM155.33 579.2h2.2v2.2h-2.2zM155.74 590.47h2.2v2.2h-2.2zM156.15 556.65h2.2v2.2h-2.2zM156.56 545.38h2.2v2.2h-2.2zM156.97 567.92h2.2v2.2h-2.2zM157.38 601.74h2.2v2.2h-2.2zM158.61 567.92h2.2v2.2h-2.2zM159.02 545.38h2.2v2.2h-2.2zM159.43 522.83h2.2v2.2h-2.2zM159.84 590.47h2.2v2.2h-2.2zM160.25 556.65h2.2v2.2h-2.2zM160.66 545.38h2.2v2.2h-2.2zM161.07 579.2h2.2v2.2h-2.2zM161.48 590.47h2.2v2.2h-2.2zM161.89 545.38h2.2v2.2h-2.2zM162.3 590.47h2.2v2.2h-2.2zM162.71 601.74h2.2v2.2h-2.2zM163.12 567.92h2.2v2.2h-2.2zM163.94 579.2h2.2v2.2h-2.2zM164.35 545.38h2.2v2.2h-2.2zM164.76 522.83h2.2v2.2h-2.2zM165.17 579.2h2.2v2.2h-2.2zM165.58 590.47h2.2v2.2h-2.2zM165.99 556.65h2.2v2.2h-2.2zM166.4 545.38h2.2v2.2h-2.2zM166.81 590.47h2.2v2.2h-2.2zM167.22 556.65h2.2v2.2h-2.2zM167.63 545.38h2.2v2.2h-2.2zM168.04 579.2h2.2v2.2h-2.2zM168.45 601.74h2.2v2.2h-2.2zM168.86 613.02h2.2v2.2h-2.2zM169.27 567.92h2.2v2.2h-2.2zM169.68 545.38h2.2v2.2h-2.2zM170.09 579.2h2.2v2.2h-2.2zM170.5 613.02h2.2v2.2h-2.2zM170.91 579.2h2.2v2.2h-2.2zM171.32 545.38h2.2v2.2h-2.2zM171.5 545.38h2.2v2.2h-2.2zM178.9 556.65h2.2v2.2h-2.2zM179.1 567.92h2.2v2.2h-2.2zM179.4 590.47h2.2v2.2h-2.2zM180.1 556.65h2.2v2.2h-2.2zM180.9 522.83h2.2v2.2h-2.2zM181.6 466.47h2.2v2.2h-2.2zM182.01 545.38h2.2v2.2h-2.2zM182.42 556.65h2.2v2.2h-2.2zM182.83 511.56h2.2v2.2h-2.2zM183.24 489.01h2.2v2.2h-2.2zM183.65 545.38h2.2v2.2h-2.2zM184.06 556.65h2.2v2.2h-2.2zM184.47 522.83h2.2v2.2h-2.2zM184.88 500.29h2.2v2.2h-2.2zM185.29 489.01h2.2v2.2h-2.2zM185.7 511.56h2.2v2.2h-2.2zM186.11 545.38h2.2v2.2h-2.2zM186.52 567.92h2.2v2.2h-2.2zM186.93 477.74h2.2v2.2h-2.2zM187.34 522.83h2.2v2.2h-2.2zM187.75 545.38h2.2v2.2h-2.2zM188.16 500.29h2.2v2.2h-2.2zM188.57 545.38h2.2v2.2h-2.2zM188.98 567.92h2.2v2.2h-2.2zM189.39 511.56h2.2v2.2h-2.2zM189.8 556.65h2.2v2.2h-2.2zM190.21 511.56h2.2v2.2h-2.2zM190.62 489.01h2.2v2.2h-2.2zM191.03 511.56h2.2v2.2h-2.2zM191.44 545.38h2.2v2.2h-2.2zM191.85 511.56h2.2v2.2h-2.2zM192.26 489.01h2.2v2.2h-2.2zM192.67 511.56h2.2v2.2h-2.2zM193.08 545.38h2.2v2.2h-2.2zM193.49 500.29h2.2v2.2h-2.2zM193.9 489.01h2.2v2.2h-2.2zM194.31 522.83h2.2v2.2h-2.2zM194.72 500.29h2.2v2.2h-2.2zM195.13 489.01h2.2v2.2h-2.2zM195.54 511.56h2.2v2.2h-2.2zM195.95 545.38h2.2v2.2h-2.2zM196.36 511.56h2.2v2.2h-2.2zM196.77 545.38h2.2v2.2h-2.2zM197.18 500.29h2.2v2.2h-2.2zM197.59 489.01h2.2v2.2h-2.2zM198 477.74h2.2v2.2h-2.2zM198.41 477.74h2.2v2.2h-2.2zM198.82 511.56h2.2v2.2h-2.2zM199.23 545.38h2.2v2.2h-2.2zM199.64 556.65h2.2v2.2h-2.2zM200.05 522.83h2.2v2.2h-2.2zM200.46 489.01h2.2v2.2h-2.2zM200.87 522.83h2.2v2.2h-2.2zM201.28 545.38h2.2v2.2h-2.2zM201.69 500.29h2.2v2.2h-2.2zM202.1 545.38h2.2v2.2h-2.2zM202.51 489.01h2.2v2.2h-2.2zM202.92 545.38h2.2v2.2h-2.2zM203.33 511.56h2.2v2.2h-2.2zM203.74 489.01h2.2v2.2h-2.2zM204.15 522.83h2.2v2.2h-2.2zM204.56 500.29h2.2v2.2h-2.2zM204.97 522.83h2.2v2.2h-2.2zM205.38 545.38h2.2v2.2h-2.2zM205.79 511.56h2.2v2.2h-2.2zM206.2 489.01h2.2v2.2h-2.2zM206.61 477.74h2.2v2.2h-2.2zM207.02 511.56h2.2v2.2h-2.2zM207.43 545.38h2.2v2.2h-2.2zM207.84 489.01h2.2v2.2h-2.2zM208.25 477.74h2.2v2.2h-2.2zM208.66 511.56h2.2v2.2h-2.2zM209.07 522.83h2.2v2.2h-2.2zM209.48 500.29h2.2v2.2h-2.2zM209.89 477.74h2.2v2.2h-2.2zM210.3 522.83h2.2v2.2h-2.2zM210.71 545.38h2.2v2.2h-2.2zM211.12 500.29h2.2v2.2h-2.2zM211.53 477.74h2.2v2.2h-2.2zM211.94 466.47h2.2v2.2h-2.2zM212.35 466.47h2.2v2.2h-2.2zM212.76 511.56h2.2v2.2h-2.2zM213.17 545.38h2.2v2.2h-2.2zM213.58 489.01h2.2v2.2h-2.2zM213.99 500.29h2.2v2.2h-2.2zM214.4 466.47h2.2v2.2h-2.2zM214.81 455.19h2.2v2.2h-2.2zM215.22 421.37h2.2v2.2h-2.2zM215.63 466.47h2.2v2.2h-2.2zM216.04 500.29h2.2v2.2h-2.2zM216.45 511.56h2.2v2.2h-2.2zM216.86 489.01h2.2v2.2h-2.2zM217.27 466.47h2.2v2.2h-2.2zM217.68 455.19h2.2v2.2h-2.2zM218.09 500.29h2.2v2.2h-2.2zM218.5 511.56h2.2v2.2h-2.2zM218.91 466.47h2.2v2.2h-2.2zM219.32 455.19h2.2v2.2h-2.2zM219.73 489.01h2.2v2.2h-2.2zM220.14 500.29h2.2v2.2h-2.2zM220.55 455.19h2.2v2.2h-2.2zM220.96 432.65h2.2v2.2h-2.2zM221.37 489.01h2.2v2.2h-2.2zM221.78 500.29h2.2v2.2h-2.2zM222.19 455.19h2.2v2.2h-2.2zM222.6 477.74h2.2v2.2h-2.2zM223.01 489.01h2.2v2.2h-2.2zM223.42 455.19h2.2v2.2h-2.2zM223.83 432.65h2.2v2.2h-2.2zM224.24 466.47h2.2v2.2h-2.2zM224.65 500.29h2.2v2.2h-2.2zM225.06 466.47h2.2v2.2h-2.2zM225.47 432.65h2.2v2.2h-2.2zM225.88 477.74h2.2v2.2h-2.2zM226.29 511.56h2.2v2.2h-2.2zM226.7 477.74h2.2v2.2h-2.2zM227.11 432.65h2.2v2.2h-2.2zM227.52 477.74h2.2v2.2h-2.2zM227.93 489.01h2.2v2.2h-2.2zM228.34 432.65h2.2v2.2h-2.2zM228.75 421.37h2.2v2.2h-2.2zM229.16 466.47h2.2v2.2h-2.2zM229.57 489.01h2.2v2.2h-2.2zM229.98 455.19h2.2v2.2h-2.2zM230.39 489.01h2.2v2.2h-2.2zM230.8 500.29h2.2v2.2h-2.2zM231.21 466.47h2.2v2.2h-2.2zM231.62 432.65h2.2v2.2h-2.2zM232.03 489.01h2.2v2.2h-2.2zM232.44 455.19h2.2v2.2h-2.2zM232.85 421.37h2.2v2.2h-2.2zM233.26 466.47h2.2v2.2h-2.2zM233.67 500.29h2.2v2.2h-2.2zM234.08 511.56h2.2v2.2h-2.2zM234.49 477.74h2.2v2.2h-2.2zM234.9 432.65h2.2v2.2h-2.2zM235.31 421.37h2.2v2.2h-2.2zM235.72 477.74h2.2v2.2h-2.2zM236.13 500.29h2.2v2.2h-2.2zM236.54 455.19h2.2v2.2h-2.2zM236.95 489.01h2.2v2.2h-2.2zM237.36 466.47h2.2v2.2h-2.2zM237.77 489.01h2.2v2.2h-2.2zM238.18 466.47h2.2v2.2h-2.2zM238.59 432.65h2.2v2.2h-2.2zM239 477.74h2.2v2.2h-2.2zM239.41 489.01h2.2v2.2h-2.2zM239.82 466.47h2.2v2.2h-2.2zM240.23 455.19h2.2v2.2h-2.2zM240.64 477.74h2.2v2.2h-2.2zM241.05 500.29h2.2v2.2h-2.2zM241.46 477.74h2.2v2.2h-2.2zM241.87 466.47h2.2v2.2h-2.2zM242.28 500.29h2.2v2.2h-2.2zM242.69 466.47h2.2v2.2h-2.2zM243.1 489.01h2.2v2.2h-2.2zM243.51 455.19h2.2v2.2h-2.2zM243.92 432.65h2.2v2.2h-2.2zM244.33 466.47h2.2v2.2h-2.2zM244.74 489.01h2.2v2.2h-2.2zM245.15 466.47h2.2v2.2h-2.2zM245.56 432.65h2.2v2.2h-2.2zM245.97 477.74h2.2v2.2h-2.2zM246.38 489.01h2.2v2.2h-2.2zM246.79 455.19h2.2v2.2h-2.2zM247.2 410.1h2.2v2.2h-2.2zM247.61 455.19h2.2v2.2h-2.2zM248.02 477.74h2.2v2.2h-2.2zM248.43 421.37h2.2v2.2h-2.2zM248.84 466.47h2.2v2.2h-2.2zM249.25 432.65h2.2v2.2h-2.2zM249.66 477.74h2.2v2.2h-2.2zM250.07 455.19h2.2v2.2h-2.2zM250.48 477.74h2.2v2.2h-2.2zM250.89 432.65h2.2v2.2h-2.2zM251.3 421.37h2.2v2.2h-2.2zM251.71 466.47h2.2v2.2h-2.2zM252.12 432.65h2.2v2.2h-2.2zM252.53 477.74h2.2v2.2h-2.2zM252.94 500.29h2.2v2.2h-2.2zM253.35 477.74h2.2v2.2h-2.2zM253.76 455.19h2.2v2.2h-2.2zM254.17 466.47h2.2v2.2h-2.2zM254.58 432.65h2.2v2.2h-2.2zM254.99 477.74h2.2v2.2h-2.2zM255.4 455.19h2.2v2.2h-2.2zM255.81 432.65h2.2v2.2h-2.2zM256.22 466.47h2.2v2.2h-2.2zM256.63 477.74h2.2v2.2h-2.2zM257.04 455.19h2.2v2.2h-2.2zM257.45 432.65h2.2v2.2h-2.2zM257.86 477.74h2.2v2.2h-2.2zM258.27 432.65h2.2v2.2h-2.2zM258.68 477.74h2.2v2.2h-2.2zM259.09 455.19h2.2v2.2h-2.2zM259.5 432.65h2.2v2.2h-2.2zM259.91 421.37h2.2v2.2h-2.2zM260.32 466.47h2.2v2.2h-2.2zM260.73 489.01h2.2v2.2h-2.2zM261.14 500.29h2.2v2.2h-2.2zM261.55 500.29h2.2v2.2h-2.2zM261.96 455.19h2.2v2.2h-2.2zM262.37 432.65h2.2v2.2h-2.2zM262.78 477.74h2.2v2.2h-2.2zM263.19 489.01h2.2v2.2h-2.2zM263.6 455.19h2.2v2.2h-2.2zM264.01 477.74h2.2v2.2h-2.2zM264.42 455.19h2.2v2.2h-2.2zM264.83 421.37h2.2v2.2h-2.2zM265.24 466.47h2.2v2.2h-2.2zM265.65 489.01h2.2v2.2h-2.2zM266.06 455.19h2.2v2.2h-2.2zM266.47 432.65h2.2v2.2h-2.2zM266.88 466.47h2.2v2.2h-2.2zM267.29 477.74h2.2v2.2h-2.2zM267.7 455.19h2.2v2.2h-2.2zM268.11 432.65h2.2v2.2h-2.2zM268.52 489.01h2.2v2.2h-2.2zM268.93 466.47h2.2v2.2h-2.2zM269.34 455.19h2.2v2.2h-2.2zM269.75 477.74h2.2v2.2h-2.2zM270.16 432.65h2.2v2.2h-2.2zM270.57 477.74h2.2v2.2h-2.2zM270.98 455.19h2.2v2.2h-2.2zM271.39 477.74h2.2v2.2h-2.2zM271.8 432.65h2.2v2.2h-2.2zM272.21 466.47h2.2v2.2h-2.2zM272.62 432.65h2.2v2.2h-2.2zM273.03 477.74h2.2v2.2h-2.2zM273.44 455.19h2.2v2.2h-2.2zM273.85 432.65h2.2v2.2h-2.2zM274.26 455.19h2.2v2.2h-2.2zM274.67 398.83h2.2v2.2h-2.2zM275.08 455.19h2.2v2.2h-2.2zM275.49 421.37h2.2v2.2h-2.2zM275.9 466.47h2.2v2.2h-2.2zM276.31 432.65h2.2v2.2h-2.2zM276.72 466.47h2.2v2.2h-2.2zM277.13 421.37h2.2v2.2h-2.2zM277.54 455.19h2.2v2.2h-2.2zM277.95 432.65h2.2v2.2h-2.2zM278.36 466.47h2.2v2.2h-2.2zM278.77 432.65h2.2v2.2h-2.2zM279.18 455.19h2.2v2.2h-2.2zM279.59 466.47h2.2v2.2h-2.2zM280 421.37h2.2v2.2h-2.2zM280.41 466.47h2.2v2.2h-2.2zM280.82 421.37h2.2v2.2h-2.2zM281.23 455.19h2.2v2.2h-2.2zM281.64 466.47h2.2v2.2h-2.2zM282.05 455.19h2.2v2.2h-2.2zM282.46 421.37h2.2v2.2h-2.2zM282.87 455.19h2.2v2.2h-2.2zM283.28 421.37h2.2v2.2h-2.2zM283.69 455.19h2.2v2.2h-2.2zM284.1 466.47h2.2v2.2h-2.2zM284.51 421.37h2.2v2.2h-2.2zM284.92 455.19h2.2v2.2h-2.2zM285.33 466.47h2.2v2.2h-2.2zM285.74 455.19h2.2v2.2h-2.2zM286.15 432.65h2.2v2.2h-2.2zM286.56 455.19h2.2v2.2h-2.2zM286.97 421.37h2.2v2.2h-2.2zM287.38 455.19h2.2v2.2h-2.2zM287.79 432.65h2.2v2.2h-2.2zM288.2 466.47h2.2v2.2h-2.2zM288.61 432.65h2.2v2.2h-2.2zM289.1 455.19h2.2v2.2h-2.2zM289.6 398.83h2.2v2.2h-2.2zM293.9 410.1h2.2v2.2h-2.2zM294.5 455.19h2.2v2.2h-2.2zM295.2 477.74h2.2v2.2h-2.2zM295.61 477.74h2.2v2.2h-2.2zM296.02 455.19h2.2v2.2h-2.2zM296.43 432.65h2.2v2.2h-2.2zM296.84 421.37h2.2v2.2h-2.2zM297.25 455.19h2.2v2.2h-2.2zM297.66 421.37h2.2v2.2h-2.2zM298.07 410.1h2.2v2.2h-2.2zM298.48 432.65h2.2v2.2h-2.2zM298.89 455.19h2.2v2.2h-2.2zM299.3 421.37h2.2v2.2h-2.2zM299.82 455.19h2.2v2.2h-2.2zM300.34 421.37h2.2v2.2h-2.2zM300.86 410.1h2.2v2.2h-2.2zM301.38 489.01h2.2v2.2h-2.2zM301.9 455.19h2.2v2.2h-2.2zM302.42 432.65h2.2v2.2h-2.2zM302.94 455.19h2.2v2.2h-2.2zM303.46 477.74h2.2v2.2h-2.2zM303.98 432.65h2.2v2.2h-2.2zM304.5 421.37h2.2v2.2h-2.2zM305.02 455.19h2.2v2.2h-2.2zM305.54 432.65h2.2v2.2h-2.2zM306.06 455.19h2.2v2.2h-2.2zM306.58 466.47h2.2v2.2h-2.2zM307.1 455.19h2.2v2.2h-2.2zM307.62 432.65h2.2v2.2h-2.2zM308.14 455.19h2.2v2.2h-2.2zM308.66 421.37h2.2v2.2h-2.2zM309.18 455.19h2.2v2.2h-2.2zM309.7 466.47h2.2v2.2h-2.2zM310.22 432.65h2.2v2.2h-2.2zM310.74 410.1h2.2v2.2h-2.2zM311.26 398.83h2.2v2.2h-2.2zM311.78 421.37h2.2v2.2h-2.2zM312.3 455.19h2.2v2.2h-2.2zM312.82 432.65h2.2v2.2h-2.2zM313.34 421.37h2.2v2.2h-2.2zM313.86 432.65h2.2v2.2h-2.2zM314.38 466.47h2.2v2.2h-2.2zM314.9 421.37h2.2v2.2h-2.2zM315.42 455.19h2.2v2.2h-2.2zM315.94 410.1h2.2v2.2h-2.2zM316.46 432.65h2.2v2.2h-2.2zM316.98 466.47h2.2v2.2h-2.2zM317.5 455.19h2.2v2.2h-2.2zM318.02 432.65h2.2v2.2h-2.2zM318.54 398.83h2.2v2.2h-2.2zM319.06 432.65h2.2v2.2h-2.2zM319.58 455.19h2.2v2.2h-2.2zM320.1 421.37h2.2v2.2h-2.2zM320.62 398.83h2.2v2.2h-2.2zM321.14 376.28h2.2v2.2h-2.2zM321.66 432.65h2.2v2.2h-2.2zM322.18 455.19h2.2v2.2h-2.2zM322.7 421.37h2.2v2.2h-2.2zM323.22 466.47h2.2v2.2h-2.2zM323.74 477.74h2.2v2.2h-2.2zM324.26 466.47h2.2v2.2h-2.2zM324.78 477.74h2.2v2.2h-2.2zM325.3 455.19h2.2v2.2h-2.2zM325.82 421.37h2.2v2.2h-2.2zM326.34 455.19h2.2v2.2h-2.2zM326.86 466.47h2.2v2.2h-2.2zM327.38 455.19h2.2v2.2h-2.2zM327.9 432.65h2.2v2.2h-2.2zM328.42 455.19h2.2v2.2h-2.2zM328.94 398.83h2.2v2.2h-2.2zM329.46 376.28h2.2v2.2h-2.2zM329.98 398.83h2.2v2.2h-2.2zM330.5 432.65h2.2v2.2h-2.2zM331.02 455.19h2.2v2.2h-2.2zM331.54 432.65h2.2v2.2h-2.2zM332.06 398.83h2.2v2.2h-2.2zM332.58 387.56h2.2v2.2h-2.2zM333.1 410.1h2.2v2.2h-2.2zM333.62 455.19h2.2v2.2h-2.2zM334.14 410.1h2.2v2.2h-2.2zM334.66 398.83h2.2v2.2h-2.2zM335.18 410.1h2.2v2.2h-2.2zM335.7 432.65h2.2v2.2h-2.2zM336.22 398.83h2.2v2.2h-2.2zM336.74 387.56h2.2v2.2h-2.2zM337.26 432.65h2.2v2.2h-2.2zM337.78 398.83h2.2v2.2h-2.2zM338.3 331.19h2.2v2.2h-2.2zM338.82 365.01h2.2v2.2h-2.2zM339.34 387.56h2.2v2.2h-2.2zM339.86 421.37h2.2v2.2h-2.2zM340.38 387.56h2.2v2.2h-2.2zM340.9 342.46h2.2v2.2h-2.2zM341.42 376.28h2.2v2.2h-2.2zM341.94 398.83h2.2v2.2h-2.2zM342.46 432.65h2.2v2.2h-2.2zM342.98 398.83h2.2v2.2h-2.2zM343.5 376.28h2.2v2.2h-2.2zM344.02 398.83h2.2v2.2h-2.2zM344.54 421.37h2.2v2.2h-2.2zM345.06 376.28h2.2v2.2h-2.2zM345.58 331.19h2.2v2.2h-2.2zM346.1 342.46h2.2v2.2h-2.2zM346.62 365.01h2.2v2.2h-2.2zM347.14 319.92h2.2v2.2h-2.2zM347.66 376.28h2.2v2.2h-2.2zM348.18 387.56h2.2v2.2h-2.2zM348.7 376.28h2.2v2.2h-2.2zM349.22 342.46h2.2v2.2h-2.2zM349.74 387.56h2.2v2.2h-2.2zM350.26 365.01h2.2v2.2h-2.2zM350.78 376.28h2.2v2.2h-2.2zM351.3 398.83h2.2v2.2h-2.2zM351.82 365.01h2.2v2.2h-2.2zM352.34 376.28h2.2v2.2h-2.2zM352.86 365.01h2.2v2.2h-2.2zM353.38 376.28h2.2v2.2h-2.2zM353.9 410.1h2.2v2.2h-2.2zM354.42 387.56h2.2v2.2h-2.2zM354.94 365.01h2.2v2.2h-2.2zM355.46 376.28h2.2v2.2h-2.2zM355.98 342.46h2.2v2.2h-2.2zM356.5 376.28h2.2v2.2h-2.2zM357.02 365.01h2.2v2.2h-2.2zM357.54 342.46h2.2v2.2h-2.2zM358.06 376.28h2.2v2.2h-2.2zM358.58 342.46h2.2v2.2h-2.2zM359.1 376.28h2.2v2.2h-2.2zM359.62 421.37h2.2v2.2h-2.2zM360.14 376.28h2.2v2.2h-2.2zM360.66 342.46h2.2v2.2h-2.2zM361.18 376.28h2.2v2.2h-2.2zM361.7 398.83h2.2v2.2h-2.2zM362.22 410.1h2.2v2.2h-2.2zM362.74 387.56h2.2v2.2h-2.2zM363.26 376.28h2.2v2.2h-2.2zM363.78 319.92h2.2v2.2h-2.2zM364.3 342.46h2.2v2.2h-2.2zM364.82 410.1h2.2v2.2h-2.2zM365.34 387.56h2.2v2.2h-2.2zM365.86 365.01h2.2v2.2h-2.2zM366.38 319.92h2.2v2.2h-2.2zM366.9 331.19h2.2v2.2h-2.2zM367.42 365.01h2.2v2.2h-2.2zM367.94 387.56h2.2v2.2h-2.2zM368.46 365.01h2.2v2.2h-2.2zM368.98 376.28h2.2v2.2h-2.2zM369.5 342.46h2.2v2.2h-2.2zM370.02 319.92h2.2v2.2h-2.2zM370.54 342.46h2.2v2.2h-2.2zM371.06 376.28h2.2v2.2h-2.2zM371.58 342.46h2.2v2.2h-2.2zM372.1 376.28h2.2v2.2h-2.2zM372.62 365.01h2.2v2.2h-2.2zM373.14 387.56h2.2v2.2h-2.2zM373.66 365.01h2.2v2.2h-2.2zM374.18 319.92h2.2v2.2h-2.2zM374.7 342.46h2.2v2.2h-2.2zM375.22 376.28h2.2v2.2h-2.2zM375.74 319.92h2.2v2.2h-2.2zM376.26 331.19h2.2v2.2h-2.2zM376.78 342.46h2.2v2.2h-2.2zM377.3 410.1h2.2v2.2h-2.2zM377.82 387.56h2.2v2.2h-2.2zM378.34 342.46h2.2v2.2h-2.2zM378.86 376.28h2.2v2.2h-2.2zM379.38 365.01h2.2v2.2h-2.2zM379.9 387.56h2.2v2.2h-2.2zM380.42 398.83h2.2v2.2h-2.2zM380.94 387.56h2.2v2.2h-2.2zM381.46 365.01h2.2v2.2h-2.2zM381.98 308.64h2.2v2.2h-2.2zM382.5 342.46h2.2v2.2h-2.2zM383.02 376.28h2.2v2.2h-2.2zM383.54 387.56h2.2v2.2h-2.2zM384.06 398.83h2.2v2.2h-2.2zM384.58 376.28h2.2v2.2h-2.2zM385.1 342.46h2.2v2.2h-2.2zM385.62 387.56h2.2v2.2h-2.2zM386.14 365.01h2.2v2.2h-2.2zM386.66 319.92h2.2v2.2h-2.2zM387.18 365.01h2.2v2.2h-2.2zM387.7 376.28h2.2v2.2h-2.2zM388.22 342.46h2.2v2.2h-2.2zM388.74 387.56h2.2v2.2h-2.2zM389.26 398.83h2.2v2.2h-2.2zM389.78 365.01h2.2v2.2h-2.2zM390.3 342.46h2.2v2.2h-2.2zM390.82 387.56h2.2v2.2h-2.2zM391.34 398.83h2.2v2.2h-2.2zM391.86 398.83h2.2v2.2h-2.2zM392.38 387.56h2.2v2.2h-2.2zM392.9 376.28h2.2v2.2h-2.2zM393.42 342.46h2.2v2.2h-2.2zM393.94 365.01h2.2v2.2h-2.2zM394.46 331.19h2.2v2.2h-2.2zM394.98 365.01h2.2v2.2h-2.2zM395.5 286.1h2.2v2.2h-2.2zM396.02 319.92h2.2v2.2h-2.2zM396.54 342.46h2.2v2.2h-2.2zM397.06 365.01h2.2v2.2h-2.2zM397.58 342.46h2.2v2.2h-2.2zM398.1 308.64h2.2v2.2h-2.2zM398.62 331.19h2.2v2.2h-2.2zM399.14 342.46h2.2v2.2h-2.2zM399.66 319.92h2.2v2.2h-2.2zM400.18 308.64h2.2v2.2h-2.2zM400.7 308.64h2.2v2.2h-2.2zM401.22 342.46h2.2v2.2h-2.2zM401.74 319.92h2.2v2.2h-2.2zM402.26 308.64h2.2v2.2h-2.2zM402.78 342.46h2.2v2.2h-2.2zM403.3 365.01h2.2v2.2h-2.2zM403.82 308.64h2.2v2.2h-2.2zM404.34 342.46h2.2v2.2h-2.2zM404.86 376.28h2.2v2.2h-2.2zM405.38 342.46h2.2v2.2h-2.2zM405.9 331.19h2.2v2.2h-2.2zM406.42 365.01h2.2v2.2h-2.2zM406.94 342.46h2.2v2.2h-2.2zM407.46 331.19h2.2v2.2h-2.2zM407.98 365.01h2.2v2.2h-2.2zM408.5 376.28h2.2v2.2h-2.2zM409.02 342.46h2.2v2.2h-2.2zM409.54 319.92h2.2v2.2h-2.2zM410.06 308.64h2.2v2.2h-2.2zM410.58 342.46h2.2v2.2h-2.2zM411.1 331.19h2.2v2.2h-2.2zM411.62 319.92h2.2v2.2h-2.2zM412.14 308.64h2.2v2.2h-2.2zM412.66 331.19h2.2v2.2h-2.2zM413.18 365.01h2.2v2.2h-2.2zM413.7 376.28h2.2v2.2h-2.2zM414.22 342.46h2.2v2.2h-2.2zM414.74 319.92h2.2v2.2h-2.2zM415.26 342.46h2.2v2.2h-2.2zM415.78 365.01h2.2v2.2h-2.2zM416.3 376.28h2.2v2.2h-2.2zM416.82 342.46h2.2v2.2h-2.2zM417.34 308.64h2.2v2.2h-2.2zM417.86 286.1h2.2v2.2h-2.2zM418.38 308.64h2.2v2.2h-2.2zM418.9 365.01h2.2v2.2h-2.2zM419.42 342.46h2.2v2.2h-2.2zM419.94 308.64h2.2v2.2h-2.2zM420.46 297.37h2.2v2.2h-2.2zM420.98 319.92h2.2v2.2h-2.2zM421.5 342.46h2.2v2.2h-2.2zM422.02 319.92h2.2v2.2h-2.2zM422.54 286.1h2.2v2.2h-2.2zM423.06 319.92h2.2v2.2h-2.2zM423.58 331.19h2.2v2.2h-2.2zM424.1 365.01h2.2v2.2h-2.2zM424.62 286.1h2.2v2.2h-2.2zM425.14 319.92h2.2v2.2h-2.2zM425.66 331.19h2.2v2.2h-2.2zM426.18 308.64h2.2v2.2h-2.2zM426.7 252.28h2.2v2.2h-2.2zM427.22 308.64h2.2v2.2h-2.2zM427.74 342.46h2.2v2.2h-2.2zM428.26 308.64h2.2v2.2h-2.2zM428.78 342.46h2.2v2.2h-2.2zM429.3 319.92h2.2v2.2h-2.2zM429.82 297.37h2.2v2.2h-2.2zM430.34 308.64h2.2v2.2h-2.2zM430.86 331.19h2.2v2.2h-2.2zM431.38 365.01h2.2v2.2h-2.2zM431.9 331.19h2.2v2.2h-2.2zM432.42 308.64h2.2v2.2h-2.2zM432.94 331.19h2.2v2.2h-2.2zM433.46 342.46h2.2v2.2h-2.2zM433.98 319.92h2.2v2.2h-2.2zM434.5 308.64h2.2v2.2h-2.2zM435.02 331.19h2.2v2.2h-2.2zM435.54 342.46h2.2v2.2h-2.2zM436.06 319.92h2.2v2.2h-2.2zM436.58 297.37h2.2v2.2h-2.2zM437.1 319.92h2.2v2.2h-2.2zM437.62 331.19h2.2v2.2h-2.2zM438.14 308.64h2.2v2.2h-2.2zM438.66 365.01h2.2v2.2h-2.2zM439.18 331.19h2.2v2.2h-2.2zM439.7 319.92h2.2v2.2h-2.2zM440.22 286.1h2.2v2.2h-2.2zM440.74 308.64h2.2v2.2h-2.2zM441.26 331.19h2.2v2.2h-2.2zM441.78 376.28h2.2v2.2h-2.2zM442.3 319.92h2.2v2.2h-2.2zM442.82 297.37h2.2v2.2h-2.2zM443.34 319.92h2.2v2.2h-2.2zM443.86 342.46h2.2v2.2h-2.2zM444.38 308.64h2.2v2.2h-2.2zM444.9 331.19h2.2v2.2h-2.2zM445.42 342.46h2.2v2.2h-2.2zM445.94 331.19h2.2v2.2h-2.2zM446.46 297.37h2.2v2.2h-2.2zM446.98 331.19h2.2v2.2h-2.2zM447.5 342.46h2.2v2.2h-2.2zM448.02 319.92h2.2v2.2h-2.2zM448.54 308.64h2.2v2.2h-2.2zM449.06 331.19h2.2v2.2h-2.2zM449.58 342.46h2.2v2.2h-2.2zM450.1 331.19h2.2v2.2h-2.2zM450.62 308.64h2.2v2.2h-2.2zM451.14 331.19h2.2v2.2h-2.2zM451.66 342.46h2.2v2.2h-2.2zM452.18 263.55h2.2v2.2h-2.2zM452.7 308.64h2.2v2.2h-2.2zM453.22 342.46h2.2v2.2h-2.2zM453.74 319.92h2.2v2.2h-2.2zM454.26 263.55h2.2v2.2h-2.2zM454.78 319.92h2.2v2.2h-2.2zM455.3 331.19h2.2v2.2h-2.2zM455.82 297.37h2.2v2.2h-2.2zM456.34 319.92h2.2v2.2h-2.2zM456.86 365.01h2.2v2.2h-2.2zM457.38 319.92h2.2v2.2h-2.2zM457.9 297.37h2.2v2.2h-2.2zM458.42 319.92h2.2v2.2h-2.2zM458.94 297.37h2.2v2.2h-2.2zM459.46 319.92h2.2v2.2h-2.2zM459.98 331.19h2.2v2.2h-2.2zM460.5 308.64h2.2v2.2h-2.2zM461.02 252.28h2.2v2.2h-2.2zM461.54 308.64h2.2v2.2h-2.2zM462.06 331.19h2.2v2.2h-2.2zM462.58 319.92h2.2v2.2h-2.2zM463.1 297.37h2.2v2.2h-2.2zM463.62 319.92h2.2v2.2h-2.2zM464.14 297.37h2.2v2.2h-2.2zM464.66 308.64h2.2v2.2h-2.2zM465.18 319.92h2.2v2.2h-2.2zM465.7 297.37h2.2v2.2h-2.2zM466.22 319.92h2.2v2.2h-2.2zM466.74 331.19h2.2v2.2h-2.2zM467.26 308.64h2.2v2.2h-2.2zM467.78 297.37h2.2v2.2h-2.2zM468.3 319.92h2.2v2.2h-2.2zM468.82 308.64h2.2v2.2h-2.2zM469.34 297.37h2.2v2.2h-2.2zM469.86 319.92h2.2v2.2h-2.2zM470.38 331.19h2.2v2.2h-2.2zM470.9 252.28h2.2v2.2h-2.2zM471.42 308.64h2.2v2.2h-2.2zM471.94 319.92h2.2v2.2h-2.2zM472.46 308.64h2.2v2.2h-2.2zM472.98 297.37h2.2v2.2h-2.2zM473.5 308.64h2.2v2.2h-2.2zM474.02 331.19h2.2v2.2h-2.2zM474.54 319.92h2.2v2.2h-2.2zM475.06 297.37h2.2v2.2h-2.2zM475.58 331.19h2.2v2.2h-2.2zM476.1 308.64h2.2v2.2h-2.2zM476.62 297.37h2.2v2.2h-2.2zM477.14 286.1h2.2v2.2h-2.2zM477.66 319.92h2.2v2.2h-2.2zM478.18 331.19h2.2v2.2h-2.2zM478.7 297.37h2.2v2.2h-2.2zM479.22 286.1h2.2v2.2h-2.2zM479.74 252.28h2.2v2.2h-2.2zM480.26 308.64h2.2v2.2h-2.2zM480.78 319.92h2.2v2.2h-2.2zM481.3 297.37h2.2v2.2h-2.2zM481.82 308.64h2.2v2.2h-2.2zM482.34 342.46h2.2v2.2h-2.2zM482.86 331.19h2.2v2.2h-2.2zM483.38 308.64h2.2v2.2h-2.2zM483.9 319.92h2.2v2.2h-2.2zM484.42 297.37h2.2v2.2h-2.2zM484.94 286.1h2.2v2.2h-2.2zM485.46 308.64h2.2v2.2h-2.2zM485.98 331.19h2.2v2.2h-2.2zM486.5 308.64h2.2v2.2h-2.2zM487.02 297.37h2.2v2.2h-2.2zM487.54 308.64h2.2v2.2h-2.2zM488.06 331.19h2.2v2.2h-2.2zM488.58 297.37h2.2v2.2h-2.2zM489.1 319.92h2.2v2.2h-2.2zM489.62 297.37h2.2v2.2h-2.2zM490.14 319.92h2.2v2.2h-2.2zM490.66 331.19h2.2v2.2h-2.2zM491.18 297.37h2.2v2.2h-2.2zM491.7 319.92h2.2v2.2h-2.2zM492.22 331.19h2.2v2.2h-2.2zM492.74 297.37h2.2v2.2h-2.2zM493.26 252.28h2.2v2.2h-2.2zM493.78 308.64h2.2v2.2h-2.2zM494.3 319.92h2.2v2.2h-2.2zM494.82 297.37h2.2v2.2h-2.2zM495.34 319.92h2.2v2.2h-2.2zM495.86 331.19h2.2v2.2h-2.2zM496.38 319.92h2.2v2.2h-2.2zM496.9 297.37h2.2v2.2h-2.2zM497.42 331.19h2.2v2.2h-2.2zM497.94 308.64h2.2v2.2h-2.2zM498.46 297.37h2.2v2.2h-2.2zM498.98 319.92h2.2v2.2h-2.2zM499.5 331.19h2.2v2.2h-2.2zM500.02 319.92h2.2v2.2h-2.2zM500.54 308.64h2.2v2.2h-2.2zM501.06 297.37h2.2v2.2h-2.2zM501.58 319.92h2.2v2.2h-2.2zM502.1 331.19h2.2v2.2h-2.2zM502.62 308.64h2.2v2.2h-2.2zM503.14 297.37h2.2v2.2h-2.2zM503.66 263.55h2.2v2.2h-2.2zM504.18 297.37h2.2v2.2h-2.2zM504.7 319.92h2.2v2.2h-2.2zM505.22 263.55h2.2v2.2h-2.2zM505.74 308.64h2.2v2.2h-2.2zM506.26 331.19h2.2v2.2h-2.2zM506.78 308.64h2.2v2.2h-2.2zM507.3 286.1h2.2v2.2h-2.2zM507.82 308.64h2.2v2.2h-2.2zM508.34 319.92h2.2v2.2h-2.2zM508.86 308.64h2.2v2.2h-2.2zM509.38 319.92h2.2v2.2h-2.2zM509.9 331.19h2.2v2.2h-2.2zM510.42 297.37h2.2v2.2h-2.2zM510.94 286.1h2.2v2.2h-2.2zM511.46 297.37h2.2v2.2h-2.2zM511.98 319.92h2.2v2.2h-2.2zM512.5 331.19h2.2v2.2h-2.2zM513.02 308.64h2.2v2.2h-2.2zM513.54 297.37h2.2v2.2h-2.2zM514.06 331.19h2.2v2.2h-2.2zM514.58 342.46h2.2v2.2h-2.2zM515.1 331.19h2.2v2.2h-2.2zM515.62 308.64h2.2v2.2h-2.2zM516.14 286.1h2.2v2.2h-2.2zM516.66 297.37h2.2v2.2h-2.2zM517.18 252.28h2.2v2.2h-2.2zM517.64 241.01h2.2v2.2h-2.2zM518.1 218.46h2.2v2.2h-2.2zM518.56 252.28h2.2v2.2h-2.2zM519.02 286.1h2.2v2.2h-2.2zM519.48 241.01h2.2v2.2h-2.2zM519.94 263.55h2.2v2.2h-2.2zM520.4 308.64h2.2v2.2h-2.2zM520.86 286.1h2.2v2.2h-2.2zM521.32 241.01h2.2v2.2h-2.2zM521.78 297.37h2.2v2.2h-2.2zM522.24 308.64h2.2v2.2h-2.2zM522.7 252.28h2.2v2.2h-2.2zM523.16 286.1h2.2v2.2h-2.2zM523.62 252.28h2.2v2.2h-2.2zM524.08 241.01h2.2v2.2h-2.2zM524.54 263.55h2.2v2.2h-2.2zM525 286.1h2.2v2.2h-2.2zM525.46 252.28h2.2v2.2h-2.2zM525.92 297.37h2.2v2.2h-2.2zM526.38 308.64h2.2v2.2h-2.2zM526.84 263.55h2.2v2.2h-2.2zM527.3 241.01h2.2v2.2h-2.2zM527.76 263.55h2.2v2.2h-2.2zM528.22 297.37h2.2v2.2h-2.2zM528.68 263.55h2.2v2.2h-2.2zM529.14 297.37h2.2v2.2h-2.2zM529.6 308.64h2.2v2.2h-2.2zM530.06 252.28h2.2v2.2h-2.2zM530.52 241.01h2.2v2.2h-2.2zM530.98 229.73h2.2v2.2h-2.2zM531.44 263.55h2.2v2.2h-2.2zM531.9 297.37h2.2v2.2h-2.2zM532.36 263.55h2.2v2.2h-2.2zM532.82 241.01h2.2v2.2h-2.2zM533.28 286.1h2.2v2.2h-2.2zM533.74 297.37h2.2v2.2h-2.2zM534.2 263.55h2.2v2.2h-2.2zM534.66 308.64h2.2v2.2h-2.2zM535.12 263.55h2.2v2.2h-2.2zM535.58 252.28h2.2v2.2h-2.2zM536.04 297.37h2.2v2.2h-2.2zM536.5 252.28h2.2v2.2h-2.2zM536.96 241.01h2.2v2.2h-2.2zM537.42 263.55h2.2v2.2h-2.2zM537.88 297.37h2.2v2.2h-2.2zM538.34 308.64h2.2v2.2h-2.2zM538.8 263.55h2.2v2.2h-2.2zM539.26 286.1h2.2v2.2h-2.2zM539.72 241.01h2.2v2.2h-2.2zM540.18 286.1h2.2v2.2h-2.2zM540.64 297.37h2.2v2.2h-2.2zM541.1 308.64h2.2v2.2h-2.2zM541.56 263.55h2.2v2.2h-2.2zM542.02 241.01h2.2v2.2h-2.2zM542.48 297.37h2.2v2.2h-2.2zM542.94 308.64h2.2v2.2h-2.2zM543.4 252.28h2.2v2.2h-2.2zM543.86 218.46h2.2v2.2h-2.2zM544.32 286.1h2.2v2.2h-2.2zM544.78 308.64h2.2v2.2h-2.2zM545.24 286.1h2.2v2.2h-2.2zM545.7 252.28h2.2v2.2h-2.2zM546.16 241.01h2.2v2.2h-2.2zM546.62 286.1h2.2v2.2h-2.2zM547.08 229.73h2.2v2.2h-2.2zM547.54 263.55h2.2v2.2h-2.2zM548 308.64h2.2v2.2h-2.2zM548.46 286.1h2.2v2.2h-2.2zM548.92 241.01h2.2v2.2h-2.2zM549.38 286.1h2.2v2.2h-2.2zM549.84 229.73h2.2v2.2h-2.2zM550.3 252.28h2.2v2.2h-2.2zM550.76 286.1h2.2v2.2h-2.2zM551.22 241.01h2.2v2.2h-2.2zM551.68 308.64h2.2v2.2h-2.2zM552.14 308.64h2.2v2.2h-2.2zM552.6 263.55h2.2v2.2h-2.2zM553.06 229.73h2.2v2.2h-2.2zM553.52 263.55h2.2v2.2h-2.2zM553.98 308.64h2.2v2.2h-2.2zM554.44 286.1h2.2v2.2h-2.2zM554.9 241.01h2.2v2.2h-2.2zM555.36 286.1h2.2v2.2h-2.2zM555.82 297.37h2.2v2.2h-2.2zM556.28 263.55h2.2v2.2h-2.2zM556.74 241.01h2.2v2.2h-2.2zM557.2 286.1h2.2v2.2h-2.2zM557.66 252.28h2.2v2.2h-2.2zM558.12 241.01h2.2v2.2h-2.2zM558.58 297.37h2.2v2.2h-2.2zM559.04 252.28h2.2v2.2h-2.2zM559.5 241.01h2.2v2.2h-2.2zM559.96 263.55h2.2v2.2h-2.2zM560.42 297.37h2.2v2.2h-2.2zM560.88 241.01h2.2v2.2h-2.2zM561.34 286.1h2.2v2.2h-2.2zM561.8 252.28h2.2v2.2h-2.2zM562.26 241.01h2.2v2.2h-2.2zM562.72 263.55h2.2v2.2h-2.2zM563.18 297.37h2.2v2.2h-2.2zM563.64 241.01h2.2v2.2h-2.2zM564.1 297.37h2.2v2.2h-2.2zM564.56 252.28h2.2v2.2h-2.2zM565.02 241.01h2.2v2.2h-2.2zM565.48 286.1h2.2v2.2h-2.2zM565.94 241.01h2.2v2.2h-2.2zM566.4 263.55h2.2v2.2h-2.2zM566.86 286.1h2.2v2.2h-2.2zM567.32 263.55h2.2v2.2h-2.2zM567.78 286.1h2.2v2.2h-2.2zM568.24 241.01h2.2v2.2h-2.2zM568.7 297.37h2.2v2.2h-2.2zM569.16 252.28h2.2v2.2h-2.2zM569.62 286.1h2.2v2.2h-2.2zM570.08 241.01h2.2v2.2h-2.2zM570.54 297.37h2.2v2.2h-2.2zM571 252.28h2.2v2.2h-2.2zM571.46 241.01h2.2v2.2h-2.2zM571.92 263.55h2.2v2.2h-2.2zM572.38 297.37h2.2v2.2h-2.2zM572.84 263.55h2.2v2.2h-2.2zM573.3 286.1h2.2v2.2h-2.2zM573.76 252.28h2.2v2.2h-2.2zM574.22 286.1h2.2v2.2h-2.2zM574.68 241.01h2.2v2.2h-2.2zM575.14 263.55h2.2v2.2h-2.2zM575.6 297.37h2.2v2.2h-2.2zM576.06 241.01h2.2v2.2h-2.2zM576.52 308.64h2.2v2.2h-2.2zM576.98 286.1h2.2v2.2h-2.2zM577.44 252.28h2.2v2.2h-2.2zM577.9 286.1h2.2v2.2h-2.2zM578.36 263.55h2.2v2.2h-2.2zM578.82 297.37h2.2v2.2h-2.2zM579.28 252.28h2.2v2.2h-2.2zM579.74 241.01h2.2v2.2h-2.2zM580.2 286.1h2.2v2.2h-2.2zM580.66 241.01h2.2v2.2h-2.2zM581.12 286.1h2.2v2.2h-2.2zM581.58 297.37h2.2v2.2h-2.2zM582.04 252.28h2.2v2.2h-2.2zM582.5 241.01h2.2v2.2h-2.2zM582.96 286.1h2.2v2.2h-2.2zM583.42 229.73h2.2v2.2h-2.2zM583.88 229.73h2.2v2.2h-2.2zM584.34 263.55h2.2v2.2h-2.2zM584.8 286.1h2.2v2.2h-2.2zM585.26 252.28h2.2v2.2h-2.2zM585.72 241.01h2.2v2.2h-2.2zM586.18 297.37h2.2v2.2h-2.2zM586.64 241.01h2.2v2.2h-2.2zM587.1 286.1h2.2v2.2h-2.2zM587.56 241.01h2.2v2.2h-2.2zM588.02 263.55h2.2v2.2h-2.2zM588.48 286.1h2.2v2.2h-2.2zM588.94 241.01h2.2v2.2h-2.2zM589.4 229.73h2.2v2.2h-2.2zM589.86 218.46h2.2v2.2h-2.2zM590.32 263.55h2.2v2.2h-2.2zM590.78 286.1h2.2v2.2h-2.2zM591.24 241.01h2.2v2.2h-2.2zM591.7 286.1h2.2v2.2h-2.2zM592.16 241.01h2.2v2.2h-2.2zM592.62 286.1h2.2v2.2h-2.2zM593.08 241.01h2.2v2.2h-2.2zM593.54 286.1h2.2v2.2h-2.2zM594 241.01h2.2v2.2h-2.2zM594.46 286.1h2.2v2.2h-2.2zM594.92 297.37h2.2v2.2h-2.2zM595.38 252.28h2.2v2.2h-2.2zM595.84 241.01h2.2v2.2h-2.2zM596.3 286.1h2.2v2.2h-2.2zM596.76 263.55h2.2v2.2h-2.2zM597.22 286.1h2.2v2.2h-2.2zM597.68 241.01h2.2v2.2h-2.2zM598.14 308.64h2.2v2.2h-2.2zM598.6 252.28h2.2v2.2h-2.2zM599.06 229.73h2.2v2.2h-2.2zM599.52 286.1h2.2v2.2h-2.2zM599.98 252.28h2.2v2.2h-2.2zM600.44 241.01h2.2v2.2h-2.2zM600.9 263.55h2.2v2.2h-2.2zM601.36 286.1h2.2v2.2h-2.2zM601.82 241.01h2.2v2.2h-2.2zM602.28 263.55h2.2v2.2h-2.2zM602.74 286.1h2.2v2.2h-2.2zM603.2 229.73h2.2v2.2h-2.2zM603.66 252.28h2.2v2.2h-2.2zM604.12 286.1h2.2v2.2h-2.2zM604.58 252.28h2.2v2.2h-2.2zM605.04 308.64h2.2v2.2h-2.2zM605.5 252.28h2.2v2.2h-2.2zM605.96 241.01h2.2v2.2h-2.2zM606.42 286.1h2.2v2.2h-2.2zM606.88 252.28h2.2v2.2h-2.2zM607.34 241.01h2.2v2.2h-2.2zM607.8 218.46h2.2v2.2h-2.2zM608.26 241.01h2.2v2.2h-2.2zM608.78 263.55h2.2v2.2h-2.2zM609.3 241.01h2.2v2.2h-2.2zM609.82 263.55h2.2v2.2h-2.2zM610.34 229.73h2.2v2.2h-2.2zM610.86 263.55h2.2v2.2h-2.2zM611.38 241.01h2.2v2.2h-2.2zM611.9 229.73h2.2v2.2h-2.2zM612.42 252.28h2.2v2.2h-2.2zM612.94 218.46h2.2v2.2h-2.2zM613.46 241.01h2.2v2.2h-2.2zM613.98 263.55h2.2v2.2h-2.2zM614.5 241.01h2.2v2.2h-2.2zM615.02 229.73h2.2v2.2h-2.2zM615.54 252.28h2.2v2.2h-2.2zM616.06 263.55h2.2v2.2h-2.2zM616.58 229.73h2.2v2.2h-2.2zM617.1 218.46h2.2v2.2h-2.2zM617.62 252.28h2.2v2.2h-2.2zM618.14 263.55h2.2v2.2h-2.2zM618.66 252.28h2.2v2.2h-2.2zM619.18 241.01h2.2v2.2h-2.2zM619.7 218.46h2.2v2.2h-2.2zM620.22 229.73h2.2v2.2h-2.2zM620.74 241.01h2.2v2.2h-2.2zM621.26 286.1h2.2v2.2h-2.2zM621.78 252.28h2.2v2.2h-2.2zM622.3 241.01h2.2v2.2h-2.2zM622.82 263.55h2.2v2.2h-2.2zM623.34 241.01h2.2v2.2h-2.2zM623.86 263.55h2.2v2.2h-2.2zM624.38 252.28h2.2v2.2h-2.2zM624.9 241.01h2.2v2.2h-2.2zM625.42 286.1h2.2v2.2h-2.2zM625.94 241.01h2.2v2.2h-2.2zM626.46 286.1h2.2v2.2h-2.2zM626.98 297.37h2.2v2.2h-2.2zM627.5 263.55h2.2v2.2h-2.2zM628.02 297.37h2.2v2.2h-2.2zM628.54 263.55h2.2v2.2h-2.2zM629.06 241.01h2.2v2.2h-2.2zM629.58 263.55h2.2v2.2h-2.2zM630.1 218.46h2.2v2.2h-2.2zM630.62 229.73h2.2v2.2h-2.2zM631.14 297.37h2.2v2.2h-2.2zM631.66 286.1h2.2v2.2h-2.2zM632.18 252.28h2.2v2.2h-2.2zM632.7 241.01h2.2v2.2h-2.2zM633.22 297.37h2.2v2.2h-2.2zM633.74 263.55h2.2v2.2h-2.2zM634.26 241.01h2.2v2.2h-2.2zM634.78 252.28h2.2v2.2h-2.2zM635.3 297.37h2.2v2.2h-2.2zM635.82 263.55h2.2v2.2h-2.2zM636.34 241.01h2.2v2.2h-2.2zM636.86 263.55h2.2v2.2h-2.2zM637.38 297.37h2.2v2.2h-2.2zM637.9 286.1h2.2v2.2h-2.2zM638.42 252.28h2.2v2.2h-2.2zM638.94 241.01h2.2v2.2h-2.2zM639.46 263.55h2.2v2.2h-2.2zM639.98 241.01h2.2v2.2h-2.2zM640.5 263.55h2.2v2.2h-2.2zM641.02 241.01h2.2v2.2h-2.2zM641.54 252.28h2.2v2.2h-2.2zM642.06 241.01h2.2v2.2h-2.2zM642.58 263.55h2.2v2.2h-2.2zM643.1 241.01h2.2v2.2h-2.2zM643.62 218.46h2.2v2.2h-2.2zM644.14 241.01h2.2v2.2h-2.2zM644.66 263.55h2.2v2.2h-2.2zM645.2 241.01h2.2v2.2h-2.2zM645.8 173.37h2.2v2.2h-2.2zM646.5 207.19h2.2v2.2h-2.2zM647.1 252.28h2.2v2.2h-2.2zM647.9 207.19h2.2v2.2h-2.2zM648.5 218.46h2.2v2.2h-2.2zM649.3 263.55h2.2v2.2h-2.2zM650.1 229.73h2.2v2.2h-2.2zM650.7 286.1h2.2v2.2h-2.2zM651.2 241.01h2.2v2.2h-2.2zM651.72 263.55h2.2v2.2h-2.2zM652.24 241.01h2.2v2.2h-2.2zM652.76 263.55h2.2v2.2h-2.2zM653.28 241.01h2.2v2.2h-2.2zM653.8 263.55h2.2v2.2h-2.2zM654.32 297.37h2.2v2.2h-2.2zM654.84 263.55h2.2v2.2h-2.2zM655.36 241.01h2.2v2.2h-2.2zM655.88 297.37h2.2v2.2h-2.2zM656.4 286.1h2.2v2.2h-2.2zM656.92 252.28h2.2v2.2h-2.2zM657.44 218.46h2.2v2.2h-2.2zM657.96 241.01h2.2v2.2h-2.2zM658.48 252.28h2.2v2.2h-2.2zM659 297.37h2.2v2.2h-2.2zM659.52 286.1h2.2v2.2h-2.2zM660.04 252.28h2.2v2.2h-2.2zM660.56 229.73h2.2v2.2h-2.2zM661.08 252.28h2.2v2.2h-2.2zM661.6 286.1h2.2v2.2h-2.2zM662.12 252.28h2.2v2.2h-2.2zM662.64 241.01h2.2v2.2h-2.2zM663.16 263.55h2.2v2.2h-2.2zM663.68 286.1h2.2v2.2h-2.2zM664.2 252.28h2.2v2.2h-2.2zM664.72 241.01h2.2v2.2h-2.2zM665.24 263.55h2.2v2.2h-2.2zM665.76 252.28h2.2v2.2h-2.2zM666.28 241.01h2.2v2.2h-2.2zM666.8 229.73h2.2v2.2h-2.2zM667.32 252.28h2.2v2.2h-2.2zM667.84 218.46h2.2v2.2h-2.2zM668.36 241.01h2.2v2.2h-2.2zM668.88 263.55h2.2v2.2h-2.2zM669.4 297.37h2.2v2.2h-2.2zM669.92 263.55h2.2v2.2h-2.2zM670.44 297.37h2.2v2.2h-2.2zM670.96 263.55h2.2v2.2h-2.2zM671.48 218.46h2.2v2.2h-2.2zM672 229.73h2.2v2.2h-2.2zM672.52 252.28h2.2v2.2h-2.2zM673.04 241.01h2.2v2.2h-2.2zM673.56 229.73h2.2v2.2h-2.2zM674.08 263.55h2.2v2.2h-2.2zM674.6 286.1h2.2v2.2h-2.2zM675.12 252.28h2.2v2.2h-2.2zM675.64 229.73h2.2v2.2h-2.2zM676.16 252.28h2.2v2.2h-2.2zM676.68 241.01h2.2v2.2h-2.2zM677.2 263.55h2.2v2.2h-2.2zM677.72 252.28h2.2v2.2h-2.2zM678.24 241.01h2.2v2.2h-2.2zM678.76 229.73h2.2v2.2h-2.2zM679.28 252.28h2.2v2.2h-2.2zM679.8 263.55h2.2v2.2h-2.2zM680.32 252.28h2.2v2.2h-2.2zM680.84 241.01h2.2v2.2h-2.2zM681.36 252.28h2.2v2.2h-2.2zM681.88 263.55h2.2v2.2h-2.2zM682.4 229.73h2.2v2.2h-2.2zM682.92 241.01h2.2v2.2h-2.2zM683.44 263.55h2.2v2.2h-2.2zM683.96 241.01h2.2v2.2h-2.2zM684.48 252.28h2.2v2.2h-2.2zM685 286.1h2.2v2.2h-2.2zM685.52 297.37h2.2v2.2h-2.2zM686.04 263.55h2.2v2.2h-2.2zM686.5 263.55h2.2v2.2h-2.2zM687.1 218.46h2.2v2.2h-2.2zM687.65 173.37h2.2v2.2h-2.2zM688.2 195.91h2.2v2.2h-2.2zM688.8 218.46h2.2v2.2h-2.2zM689.5 195.91h2.2v2.2h-2.2zM690.1 207.19h2.2v2.2h-2.2zM690.7 229.73h2.2v2.2h-2.2zM691.3 195.91h2.2v2.2h-2.2zM691.9 252.28h2.2v2.2h-2.2zM692.4 195.91h2.2v2.2h-2.2zM692.9 162.1h2.2v2.2h-2.2zM693.4 173.37h2.2v2.2h-2.2zM693.9 218.46h2.2v2.2h-2.2zM694.5 195.91h2.2v2.2h-2.2zM695.1 241.01h2.2v2.2h-2.2zM695.8 207.19h2.2v2.2h-2.2zM696.5 229.73h2.2v2.2h-2.2zM697.2 229.73h2.2v2.2h-2.2zM697.9 229.73h2.2v2.2h-2.2zM698.4 229.73h2.2v2.2h-2.2zM699.2 218.46h2.2v2.2h-2.2zM699.72 241.01h2.2v2.2h-2.2zM700.24 252.28h2.2v2.2h-2.2zM700.76 173.37h2.2v2.2h-2.2zM701.28 241.01h2.2v2.2h-2.2zM701.8 274.83h2.2v2.2h-2.2zM702.32 252.28h2.2v2.2h-2.2zM702.84 229.73h2.2v2.2h-2.2zM703.36 263.55h2.2v2.2h-2.2zM703.88 274.83h2.2v2.2h-2.2zM704.4 252.28h2.2v2.2h-2.2zM704.92 229.73h2.2v2.2h-2.2zM705.44 252.28h2.2v2.2h-2.2zM705.96 297.37h2.2v2.2h-2.2zM706.48 263.55h2.2v2.2h-2.2zM707 241.01h2.2v2.2h-2.2zM707.52 229.73h2.2v2.2h-2.2zM708.04 263.55h2.2v2.2h-2.2zM708.56 286.1h2.2v2.2h-2.2zM709.08 252.28h2.2v2.2h-2.2zM709.6 218.46h2.2v2.2h-2.2zM710.12 252.28h2.2v2.2h-2.2zM710.64 263.55h2.2v2.2h-2.2zM711.16 286.1h2.2v2.2h-2.2zM711.68 252.28h2.2v2.2h-2.2zM712.2 218.46h2.2v2.2h-2.2zM712.72 263.55h2.2v2.2h-2.2zM713.24 286.1h2.2v2.2h-2.2zM713.76 263.55h2.2v2.2h-2.2zM714.28 207.19h2.2v2.2h-2.2zM714.8 263.55h2.2v2.2h-2.2zM715.32 286.1h2.2v2.2h-2.2zM715.84 263.55h2.2v2.2h-2.2zM716.36 218.46h2.2v2.2h-2.2zM716.88 252.28h2.2v2.2h-2.2zM717.4 263.55h2.2v2.2h-2.2zM717.92 286.1h2.2v2.2h-2.2zM718.44 263.55h2.2v2.2h-2.2zM718.96 229.73h2.2v2.2h-2.2zM719.48 252.28h2.2v2.2h-2.2zM720 286.1h2.2v2.2h-2.2zM720.52 252.28h2.2v2.2h-2.2zM721.04 218.46h2.2v2.2h-2.2zM721.56 263.55h2.2v2.2h-2.2zM722.08 274.83h2.2v2.2h-2.2zM722.6 229.73h2.2v2.2h-2.2zM723.12 218.46h2.2v2.2h-2.2zM723.64 252.28h2.2v2.2h-2.2zM724.16 274.83h2.2v2.2h-2.2zM724.68 229.73h2.2v2.2h-2.2zM725.2 263.55h2.2v2.2h-2.2zM725.72 229.73h2.2v2.2h-2.2zM726.24 263.55h2.2v2.2h-2.2zM726.76 286.1h2.2v2.2h-2.2zM727.28 252.28h2.2v2.2h-2.2zM727.8 218.46h2.2v2.2h-2.2zM728.32 263.55h2.2v2.2h-2.2zM728.84 274.83h2.2v2.2h-2.2zM729.36 252.28h2.2v2.2h-2.2zM729.88 229.73h2.2v2.2h-2.2zM730.4 263.55h2.2v2.2h-2.2zM730.92 286.1h2.2v2.2h-2.2zM731.44 263.55h2.2v2.2h-2.2zM731.96 229.73h2.2v2.2h-2.2zM732.48 263.55h2.2v2.2h-2.2zM733 274.83h2.2v2.2h-2.2zM733.52 252.28h2.2v2.2h-2.2zM734.04 229.73h2.2v2.2h-2.2zM734.56 252.28h2.2v2.2h-2.2zM735.08 274.83h2.2v2.2h-2.2zM735.6 263.55h2.2v2.2h-2.2zM736.12 229.73h2.2v2.2h-2.2zM736.64 252.28h2.2v2.2h-2.2zM737.16 274.83h2.2v2.2h-2.2zM737.68 286.1h2.2v2.2h-2.2zM738.2 274.83h2.2v2.2h-2.2zM738.72 263.55h2.2v2.2h-2.2zM739.24 229.73h2.2v2.2h-2.2zM739.76 263.55h2.2v2.2h-2.2zM740.28 286.1h2.2v2.2h-2.2zM740.8 252.28h2.2v2.2h-2.2zM741.32 229.73h2.2v2.2h-2.2zM741.84 263.55h2.2v2.2h-2.2zM742.36 218.46h2.2v2.2h-2.2zM742.88 229.73h2.2v2.2h-2.2zM743.4 263.55h2.2v2.2h-2.2zM743.92 274.83h2.2v2.2h-2.2zM744.44 263.55h2.2v2.2h-2.2zM744.96 229.73h2.2v2.2h-2.2zM745.48 263.55h2.2v2.2h-2.2zM746 286.1h2.2v2.2h-2.2zM746.52 274.83h2.2v2.2h-2.2zM747.04 252.28h2.2v2.2h-2.2zM747.56 263.55h2.2v2.2h-2.2zM748.08 286.1h2.2v2.2h-2.2zM748.6 263.55h2.2v2.2h-2.2zM749.12 229.73h2.2v2.2h-2.2zM749.64 263.55h2.2v2.2h-2.2zM750.16 229.73h2.2v2.2h-2.2zM750.68 274.83h2.2v2.2h-2.2zM751.2 252.28h2.2v2.2h-2.2zM751.72 274.83h2.2v2.2h-2.2zM752.24 229.73h2.2v2.2h-2.2zM752.76 263.55h2.2v2.2h-2.2zM753.28 229.73h2.2v2.2h-2.2zM753.8 263.55h2.2v2.2h-2.2zM754.32 286.1h2.2v2.2h-2.2zM754.84 274.83h2.2v2.2h-2.2zM755.36 229.73h2.2v2.2h-2.2zM755.88 263.55h2.2v2.2h-2.2zM756.4 229.73h2.2v2.2h-2.2zM756.92 252.28h2.2v2.2h-2.2zM757.44 274.83h2.2v2.2h-2.2zM757.96 286.1h2.2v2.2h-2.2zM758.48 263.55h2.2v2.2h-2.2zM759 252.28h2.2v2.2h-2.2zM759.52 229.73h2.2v2.2h-2.2zM760.04 263.55h2.2v2.2h-2.2zM760.56 274.83h2.2v2.2h-2.2zM761.08 252.28h2.2v2.2h-2.2zM761.6 229.73h2.2v2.2h-2.2zM762.12 218.46h2.2v2.2h-2.2zM762.64 263.55h2.2v2.2h-2.2zM763.16 274.83h2.2v2.2h-2.2zM763.68 263.55h2.2v2.2h-2.2zM764.2 252.28h2.2v2.2h-2.2zM764.72 274.83h2.2v2.2h-2.2zM765.24 252.28h2.2v2.2h-2.2zM765.76 218.46h2.2v2.2h-2.2zM766.28 263.55h2.2v2.2h-2.2zM766.8 286.1h2.2v2.2h-2.2zM767.32 274.83h2.2v2.2h-2.2zM767.84 252.28h2.2v2.2h-2.2zM768.36 297.37h2.2v2.2h-2.2zM768.88 274.83h2.2v2.2h-2.2zM769.4 252.28h2.2v2.2h-2.2zM769.92 229.73h2.2v2.2h-2.2zM770.44 263.55h2.2v2.2h-2.2zM770.96 286.1h2.2v2.2h-2.2zM771.48 263.55h2.2v2.2h-2.2zM772 229.73h2.2v2.2h-2.2zM772.52 252.28h2.2v2.2h-2.2zM773.04 274.83h2.2v2.2h-2.2zM773.56 286.1h2.2v2.2h-2.2zM774.08 274.83h2.2v2.2h-2.2zM774.6 252.28h2.2v2.2h-2.2zM775.12 274.83h2.2v2.2h-2.2zM775.64 252.28h2.2v2.2h-2.2zM776.16 218.46h2.2v2.2h-2.2zM776.68 297.37h2.2v2.2h-2.2zM777.2 274.83h2.2v2.2h-2.2zM777.72 252.28h2.2v2.2h-2.2zM778.24 229.73h2.2v2.2h-2.2zM778.76 263.55h2.2v2.2h-2.2zM779.28 252.28h2.2v2.2h-2.2zM779.8 274.83h2.2v2.2h-2.2zM780.32 297.37h2.2v2.2h-2.2zM780.84 274.83h2.2v2.2h-2.2zM781.36 252.28h2.2v2.2h-2.2zM781.88 229.73h2.2v2.2h-2.2zM782.4 274.83h2.2v2.2h-2.2zM782.92 263.55h2.2v2.2h-2.2zM783.44 252.28h2.2v2.2h-2.2zM783.96 229.73h2.2v2.2h-2.2zM784.48 263.55h2.2v2.2h-2.2zM785 286.1h2.2v2.2h-2.2zM785.52 263.55h2.2v2.2h-2.2zM786.04 252.28h2.2v2.2h-2.2zM786.56 263.55h2.2v2.2h-2.2zM787.08 274.83h2.2v2.2h-2.2zM787.6 252.28h2.2v2.2h-2.2zM788.12 229.73h2.2v2.2h-2.2zM788.64 218.46h2.2v2.2h-2.2zM789.16 252.28h2.2v2.2h-2.2zM789.68 274.83h2.2v2.2h-2.2zM790.2 286.1h2.2v2.2h-2.2zM790.72 263.55h2.2v2.2h-2.2zM791.24 297.37h2.2v2.2h-2.2zM791.76 274.83h2.2v2.2h-2.2zM792.28 252.28h2.2v2.2h-2.2zM792.8 229.73h2.2v2.2h-2.2zM793.32 218.46h2.2v2.2h-2.2zM793.84 252.28h2.2v2.2h-2.2zM794.36 263.55h2.2v2.2h-2.2zM794.88 286.1h2.2v2.2h-2.2zM795.4 252.28h2.2v2.2h-2.2zM795.92 229.73h2.2v2.2h-2.2zM796.44 252.28h2.2v2.2h-2.2zM796.96 286.1h2.2v2.2h-2.2zM797.48 252.28h2.2v2.2h-2.2zM798 229.73h2.2v2.2h-2.2zM798.52 274.83h2.2v2.2h-2.2zM799.04 263.55h2.2v2.2h-2.2zM799.56 229.73h2.2v2.2h-2.2zM800.08 252.28h2.2v2.2h-2.2zM800.6 274.83h2.2v2.2h-2.2zM801.12 286.1h2.2v2.2h-2.2zM801.64 274.83h2.2v2.2h-2.2zM802.16 252.28h2.2v2.2h-2.2zM802.68 229.73h2.2v2.2h-2.2zM803.2 263.55h2.2v2.2h-2.2zM803.72 286.1h2.2v2.2h-2.2zM804.24 252.28h2.2v2.2h-2.2zM804.76 229.73h2.2v2.2h-2.2zM805.28 274.83h2.2v2.2h-2.2zM805.8 286.1h2.2v2.2h-2.2zM806.32 263.55h2.2v2.2h-2.2zM806.84 229.73h2.2v2.2h-2.2zM807.36 274.83h2.2v2.2h-2.2zM807.88 252.28h2.2v2.2h-2.2zM808.4 229.73h2.2v2.2h-2.2zM808.92 274.83h2.2v2.2h-2.2zM809.44 263.55h2.2v2.2h-2.2zM809.96 229.73h2.2v2.2h-2.2zM810.48 252.28h2.2v2.2h-2.2zM811 274.83h2.2v2.2h-2.2zM811.52 252.28h2.2v2.2h-2.2zM812.04 229.73h2.2v2.2h-2.2zM812.56 274.83h2.2v2.2h-2.2zM813.08 263.55h2.2v2.2h-2.2zM813.6 252.28h2.2v2.2h-2.2zM814.12 218.46h2.2v2.2h-2.2zM814.64 252.28h2.2v2.2h-2.2zM815.16 263.55h2.2v2.2h-2.2zM815.68 286.1h2.2v2.2h-2.2zM816.2 263.55h2.2v2.2h-2.2zM816.72 229.73h2.2v2.2h-2.2zM817.24 263.55h2.2v2.2h-2.2zM817.76 274.83h2.2v2.2h-2.2zM818.28 229.73h2.2v2.2h-2.2zM818.8 263.55h2.2v2.2h-2.2zM819.32 229.73h2.2v2.2h-2.2zM819.84 263.55h2.2v2.2h-2.2zM820.36 286.1h2.2v2.2h-2.2zM820.88 263.55h2.2v2.2h-2.2zM821.4 229.73h2.2v2.2h-2.2zM821.92 218.46h2.2v2.2h-2.2zM822.44 263.55h2.2v2.2h-2.2zM822.96 286.1h2.2v2.2h-2.2zM823.48 252.28h2.2v2.2h-2.2zM824 263.55h2.2v2.2h-2.2zM824.52 286.1h2.2v2.2h-2.2zM825.04 252.28h2.2v2.2h-2.2zM825.56 274.83h2.2v2.2h-2.2zM826.08 252.28h2.2v2.2h-2.2zM826.6 218.46h2.2v2.2h-2.2zM827.12 252.28h2.2v2.2h-2.2zM827.64 274.83h2.2v2.2h-2.2zM828.16 263.55h2.2v2.2h-2.2zM828.68 229.73h2.2v2.2h-2.2zM829.2 274.83h2.2v2.2h-2.2zM829.72 286.1h2.2v2.2h-2.2zM830.24 252.28h2.2v2.2h-2.2zM830.76 218.46h2.2v2.2h-2.2zM831.28 252.28h2.2v2.2h-2.2zM831.8 274.83h2.2v2.2h-2.2zM832.32 252.28h2.2v2.2h-2.2zM832.84 218.46h2.2v2.2h-2.2zM833.36 252.28h2.2v2.2h-2.2zM833.88 263.55h2.2v2.2h-2.2zM834.4 229.73h2.2v2.2h-2.2zM834.92 263.55h2.2v2.2h-2.2zM835.44 229.73h2.2v2.2h-2.2zM835.96 263.55h2.2v2.2h-2.2zM836.48 274.83h2.2v2.2h-2.2zM837 252.28h2.2v2.2h-2.2zM837.52 229.73h2.2v2.2h-2.2zM838.04 252.28h2.2v2.2h-2.2zM838.56 263.55h2.2v2.2h-2.2zM839.08 274.83h2.2v2.2h-2.2zM839.6 286.1h2.2v2.2h-2.2zM840.12 263.55h2.2v2.2h-2.2zM840.64 229.73h2.2v2.2h-2.2zM841.16 263.55h2.2v2.2h-2.2zM841.68 274.83h2.2v2.2h-2.2zM842.2 252.28h2.2v2.2h-2.2zM842.72 229.73h2.2v2.2h-2.2zM843.24 263.55h2.2v2.2h-2.2zM843.76 274.83h2.2v2.2h-2.2zM844.28 252.28h2.2v2.2h-2.2zM844.8 229.73h2.2v2.2h-2.2zM845.32 263.55h2.2v2.2h-2.2zM845.84 274.83h2.2v2.2h-2.2zM846.36 252.28h2.2v2.2h-2.2zM846.88 229.73h2.2v2.2h-2.2zM847.4 263.55h2.2v2.2h-2.2zM847.92 274.83h2.2v2.2h-2.2zM848.44 252.28h2.2v2.2h-2.2zM848.96 229.73h2.2v2.2h-2.2zM849.48 274.83h2.2v2.2h-2.2zM850 229.73h2.2v2.2h-2.2zM850.52 252.28h2.2v2.2h-2.2zM851.04 274.83h2.2v2.2h-2.2zM851.56 263.55h2.2v2.2h-2.2zM852.08 229.73h2.2v2.2h-2.2zM852.6 274.83h2.2v2.2h-2.2zM853.12 286.1h2.2v2.2h-2.2zM853.64 297.37h2.2v2.2h-2.2zM854.16 263.55h2.2v2.2h-2.2zM854.68 229.73h2.2v2.2h-2.2zM855.2 263.55h2.2v2.2h-2.2zM855.72 274.83h2.2v2.2h-2.2zM856.24 252.28h2.2v2.2h-2.2zM856.76 218.46h2.2v2.2h-2.2zM857.28 252.28h2.2v2.2h-2.2zM857.8 286.1h2.2v2.2h-2.2zM858.32 252.28h2.2v2.2h-2.2zM858.84 218.46h2.2v2.2h-2.2zM859.36 252.28h2.2v2.2h-2.2zM859.88 286.1h2.2v2.2h-2.2zM860.4 252.28h2.2v2.2h-2.2zM860.92 229.73h2.2v2.2h-2.2zM861.44 263.55h2.2v2.2h-2.2zM861.96 286.1h2.2v2.2h-2.2zM862.48 263.55h2.2v2.2h-2.2zM863 252.28h2.2v2.2h-2.2zM863.52 286.1h2.2v2.2h-2.2zM864.04 263.55h2.2v2.2h-2.2zM864.56 229.73h2.2v2.2h-2.2zM865.08 263.55h2.2v2.2h-2.2zM865.6 286.1h2.2v2.2h-2.2zM866.12 263.55h2.2v2.2h-2.2zM866.64 229.73h2.2v2.2h-2.2zM867.16 274.83h2.2v2.2h-2.2zM867.68 252.28h2.2v2.2h-2.2zM868.2 218.46h2.2v2.2h-2.2zM868.72 252.28h2.2v2.2h-2.2zM869.24 263.55h2.2v2.2h-2.2zM869.76 274.83h2.2v2.2h-2.2zM870.28 263.55h2.2v2.2h-2.2zM870.8 229.73h2.2v2.2h-2.2zM871.32 274.83h2.2v2.2h-2.2zM871.84 229.73h2.2v2.2h-2.2zM872.36 218.46h2.2v2.2h-2.2zM872.88 263.55h2.2v2.2h-2.2zM873.4 274.83h2.2v2.2h-2.2zM873.92 286.1h2.2v2.2h-2.2zM874.44 263.55h2.2v2.2h-2.2zM874.96 229.73h2.2v2.2h-2.2zM875.48 263.55h2.2v2.2h-2.2zM876 286.1h2.2v2.2h-2.2zM876.52 263.55h2.2v2.2h-2.2zM877.04 229.73h2.2v2.2h-2.2zM877.56 263.55h2.2v2.2h-2.2zM878.08 286.1h2.2v2.2h-2.2zM878.6 252.28h2.2v2.2h-2.2zM879.12 229.73h2.2v2.2h-2.2zM879.64 252.28h2.2v2.2h-2.2zM880.16 274.83h2.2v2.2h-2.2zM880.68 286.1h2.2v2.2h-2.2zM881.2 263.55h2.2v2.2h-2.2zM881.72 229.73h2.2v2.2h-2.2zM882.24 263.55h2.2v2.2h-2.2zM882.76 229.73h2.2v2.2h-2.2zM883.28 263.55h2.2v2.2h-2.2zM883.8 229.73h2.2v2.2h-2.2zM884.32 263.55h2.2v2.2h-2.2zM884.84 274.83h2.2v2.2h-2.2zM885.36 252.28h2.2v2.2h-2.2zM885.88 207.19h2.2v2.2h-2.2zM886.4 263.55h2.2v2.2h-2.2zM886.92 274.83h2.2v2.2h-2.2zM887.44 229.73h2.2v2.2h-2.2zM887.96 218.46h2.2v2.2h-2.2zM888.48 229.73h2.2v2.2h-2.2zM889 263.55h2.2v2.2h-2.2zM889.52 286.1h2.2v2.2h-2.2zM890.04 263.55h2.2v2.2h-2.2zM890.56 229.73h2.2v2.2h-2.2zM891.08 263.55h2.2v2.2h-2.2zM891.6 286.1h2.2v2.2h-2.2zM892.12 263.55h2.2v2.2h-2.2zM892.64 252.28h2.2v2.2h-2.2zM893.16 286.1h2.2v2.2h-2.2zM893.68 263.55h2.2v2.2h-2.2zM894.2 252.28h2.2v2.2h-2.2zM894.72 229.73h2.2v2.2h-2.2zM895.24 263.55h2.2v2.2h-2.2zM895.76 207.19h2.2v2.2h-2.2zM896.28 252.28h2.2v2.2h-2.2zM896.8 274.83h2.2v2.2h-2.2zM897.32 286.1h2.2v2.2h-2.2zM897.84 263.55h2.2v2.2h-2.2zM898.88 218.46h2.2v2.2h-2.2zM899.4 195.91h2.2v2.2h-2.2zM899.92 207.19h2.2v2.2h-2.2zM900.44 218.46h2.2v2.2h-2.2zM900.96 252.28h2.2v2.2h-2.2zM901.48 229.73h2.2v2.2h-2.2zM902 150.82h2.2v2.2h-2.2zM902.52 207.19h2.2v2.2h-2.2zM903.04 252.28h2.2v2.2h-2.2zM903.56 207.19h2.2v2.2h-2.2zM904.08 195.91h2.2v2.2h-2.2zM904.6 229.73h2.2v2.2h-2.2zM905.12 252.28h2.2v2.2h-2.2zM905.64 218.46h2.2v2.2h-2.2zM906.16 162.1h2.2v2.2h-2.2zM906.68 207.19h2.2v2.2h-2.2zM907.2 218.46h2.2v2.2h-2.2zM907.72 252.28h2.2v2.2h-2.2zM908.24 218.46h2.2v2.2h-2.2zM908.76 184.64h2.2v2.2h-2.2zM909.28 207.19h2.2v2.2h-2.2zM909.8 218.46h2.2v2.2h-2.2zM910.32 252.28h2.2v2.2h-2.2zM910.84 207.19h2.2v2.2h-2.2zM911.36 195.91h2.2v2.2h-2.2zM911.88 218.46h2.2v2.2h-2.2zM912.4 229.73h2.2v2.2h-2.2zM912.92 263.55h2.2v2.2h-2.2zM913.44 229.73h2.2v2.2h-2.2zM913.96 207.19h2.2v2.2h-2.2zM914.48 229.73h2.2v2.2h-2.2zM915 195.91h2.2v2.2h-2.2zM915.52 229.73h2.2v2.2h-2.2zM916.04 252.28h2.2v2.2h-2.2zM916.56 218.46h2.2v2.2h-2.2zM917.08 195.91h2.2v2.2h-2.2zM917.6 229.73h2.2v2.2h-2.2zM918.12 252.28h2.2v2.2h-2.2zM918.64 218.46h2.2v2.2h-2.2zM919.16 207.19h2.2v2.2h-2.2zM919.68 184.64h2.2v2.2h-2.2zM920.2 218.46h2.2v2.2h-2.2zM920.72 252.28h2.2v2.2h-2.2zM921.24 229.73h2.2v2.2h-2.2zM921.76 207.19h2.2v2.2h-2.2zM922.28 195.91h2.2v2.2h-2.2zM922.8 207.19h2.2v2.2h-2.2zM923.32 218.46h2.2v2.2h-2.2zM923.84 252.28h2.2v2.2h-2.2zM924.36 218.46h2.2v2.2h-2.2zM924.88 195.91h2.2v2.2h-2.2zM925.4 218.46h2.2v2.2h-2.2zM925.92 229.73h2.2v2.2h-2.2zM926.44 252.28h2.2v2.2h-2.2zM926.96 229.73h2.2v2.2h-2.2zM927.48 207.19h2.2v2.2h-2.2zM928 195.91h2.2v2.2h-2.2zM928.52 229.73h2.2v2.2h-2.2zM929.04 252.28h2.2v2.2h-2.2zM929.56 207.19h2.2v2.2h-2.2zM930.08 195.91h2.2v2.2h-2.2zM930.6 218.46h2.2v2.2h-2.2zM931.12 252.28h2.2v2.2h-2.2zM931.64 207.19h2.2v2.2h-2.2zM932.16 195.91h2.2v2.2h-2.2zM932.68 218.46h2.2v2.2h-2.2zM933.2 184.64h2.2v2.2h-2.2zM933.72 207.19h2.2v2.2h-2.2zM934.24 218.46h2.2v2.2h-2.2zM934.76 252.28h2.2v2.2h-2.2zM935.28 207.19h2.2v2.2h-2.2zM935.8 195.91h2.2v2.2h-2.2zM936.32 218.46h2.2v2.2h-2.2zM936.84 252.28h2.2v2.2h-2.2zM937.36 207.19h2.2v2.2h-2.2zM937.88 195.91h2.2v2.2h-2.2zM938.4 218.46h2.2v2.2h-2.2zM938.92 252.28h2.2v2.2h-2.2zM939.44 218.46h2.2v2.2h-2.2zM939.96 195.91h2.2v2.2h-2.2zM940.48 184.64h2.2v2.2h-2.2zM941 207.19h2.2v2.2h-2.2zM941.52 218.46h2.2v2.2h-2.2zM942.04 229.73h2.2v2.2h-2.2zM942.56 252.28h2.2v2.2h-2.2zM943.08 218.46h2.2v2.2h-2.2zM943.6 207.19h2.2v2.2h-2.2zM944.12 195.91h2.2v2.2h-2.2zM944.64 218.46h2.2v2.2h-2.2zM945.16 252.28h2.2v2.2h-2.2zM945.68 184.64h2.2v2.2h-2.2zM946.2 207.19h2.2v2.2h-2.2zM946.72 229.73h2.2v2.2h-2.2zM947.24 252.28h2.2v2.2h-2.2zM947.76 218.46h2.2v2.2h-2.2zM948.28 195.91h2.2v2.2h-2.2zM948.8 229.73h2.2v2.2h-2.2zM949.32 207.19h2.2v2.2h-2.2zM949.84 229.73h2.2v2.2h-2.2zM950.36 252.28h2.2v2.2h-2.2zM950.88 218.46h2.2v2.2h-2.2zM951.4 195.91h2.2v2.2h-2.2zM951.92 218.46h2.2v2.2h-2.2zM952.44 252.28h2.2v2.2h-2.2zM952.96 207.19h2.2v2.2h-2.2zM953.48 195.91h2.2v2.2h-2.2zM954 207.19h2.2v2.2h-2.2zM954.52 218.46h2.2v2.2h-2.2zM955.04 263.55h2.2v2.2h-2.2zM955.56 184.64h2.2v2.2h-2.2zM956.08 207.19h2.2v2.2h-2.2zM956.6 218.46h2.2v2.2h-2.2zM957.12 229.73h2.2v2.2h-2.2zM957.64 207.19h2.2v2.2h-2.2zM958.16 195.91h2.2v2.2h-2.2zM958.68 207.19h2.2v2.2h-2.2zM959.2 229.73h2.2v2.2h-2.2zM959.72 252.28h2.2v2.2h-2.2zM960.24 207.19h2.2v2.2h-2.2zM960.76 195.91h2.2v2.2h-2.2zM961.28 218.46h2.2v2.2h-2.2zM961.8 229.73h2.2v2.2h-2.2zM962.32 207.19h2.2v2.2h-2.2zM962.84 195.91h2.2v2.2h-2.2zM963.36 229.73h2.2v2.2h-2.2zM963.88 218.46h2.2v2.2h-2.2zM964.4 195.91h2.2v2.2h-2.2zM964.92 207.19h2.2v2.2h-2.2zM965.44 229.73h2.2v2.2h-2.2zM965.96 252.28h2.2v2.2h-2.2zM966.48 184.64h2.2v2.2h-2.2zM967 207.19h2.2v2.2h-2.2zM967.52 229.73h2.2v2.2h-2.2zM968.04 218.46h2.2v2.2h-2.2zM968.56 274.83h2.2v2.2h-2.2zM969.08 252.28h2.2v2.2h-2.2zM969.6 207.19h2.2v2.2h-2.2zM970.12 195.91h2.2v2.2h-2.2zM970.64 207.19h2.2v2.2h-2.2zM971.16 252.28h2.2v2.2h-2.2zM971.68 207.19h2.2v2.2h-2.2zM972.2 195.91h2.2v2.2h-2.2zM972.72 184.64h2.2v2.2h-2.2zM973.24 218.46h2.2v2.2h-2.2zM973.76 229.73h2.2v2.2h-2.2zM974.28 218.46h2.2v2.2h-2.2zM974.8 195.91h2.2v2.2h-2.2zM975.32 218.46h2.2v2.2h-2.2zM975.84 252.28h2.2v2.2h-2.2zM976.36 184.64h2.2v2.2h-2.2zM976.88 218.46h2.2v2.2h-2.2zM977.4 229.73h2.2v2.2h-2.2zM977.92 252.28h2.2v2.2h-2.2zM978.44 218.46h2.2v2.2h-2.2zM978.96 195.91h2.2v2.2h-2.2zM979.48 184.64h2.2v2.2h-2.2zM980 207.19h2.2v2.2h-2.2zM980.52 229.73h2.2v2.2h-2.2zM981.04 252.28h2.2v2.2h-2.2zM981.56 263.55h2.2v2.2h-2.2zM982.08 229.73h2.2v2.2h-2.2zM982.6 207.19h2.2v2.2h-2.2zM983.12 195.91h2.2v2.2h-2.2zM983.64 218.46h2.2v2.2h-2.2zM984.16 252.28h2.2v2.2h-2.2zM984.68 263.55h2.2v2.2h-2.2zM985.2 229.73h2.2v2.2h-2.2zM985.72 195.91h2.2v2.2h-2.2zM986.24 218.46h2.2v2.2h-2.2zM986.76 252.28h2.2v2.2h-2.2zM987.28 218.46h2.2v2.2h-2.2zM987.8 195.91h2.2v2.2h-2.2zM988.32 218.46h2.2v2.2h-2.2zM988.84 229.73h2.2v2.2h-2.2zM989.36 207.19h2.2v2.2h-2.2zM989.88 195.91h2.2v2.2h-2.2zM990.4 229.73h2.2v2.2h-2.2zM990.92 184.64h2.2v2.2h-2.2zM991.44 195.91h2.2v2.2h-2.2zM991.96 218.46h2.2v2.2h-2.2zM992.48 229.73h2.2v2.2h-2.2zM993 218.46h2.2v2.2h-2.2zM993.52 195.91h2.2v2.2h-2.2zM994.04 218.46h2.2v2.2h-2.2zM994.56 252.28h2.2v2.2h-2.2zM995.08 218.46h2.2v2.2h-2.2zM995.6 195.91h2.2v2.2h-2.2zM996.12 207.19h2.2v2.2h-2.2zM996.64 218.46h2.2v2.2h-2.2zM997.16 229.73h2.2v2.2h-2.2zM997.68 252.28h2.2v2.2h-2.2zM998.2 229.73h2.2v2.2h-2.2zM998.72 207.19h2.2v2.2h-2.2zM999.24 184.64h2.2v2.2h-2.2zM999.76 195.91h2.2v2.2h-2.2zM1000.28 218.46h2.2v2.2h-2.2zM1000.8 252.28h2.2v2.2h-2.2zM1001.32 263.55h2.2v2.2h-2.2zM1001.84 252.28h2.2v2.2h-2.2zM1002.36 207.19h2.2v2.2h-2.2zM1002.88 195.91h2.2v2.2h-2.2zM1003.4 229.73h2.2v2.2h-2.2zM1003.92 263.55h2.2v2.2h-2.2z" fill="#0a0ac4"/></g>
<path d="M80 152H1005V636" stroke="#6c6c6c" stroke-width="2" fill="none"/>
<path d="M80 151V636H1006" stroke="#2a2a2a" stroke-width="2" fill="none" stroke-linejoin="miter"/>
<path d="M73.5 632.24H86.5M76.5 617.81H83.5M76.5 603.37H83.5M76.5 588.94H83.5M76.5 574.51H83.5M73.5 560.08H86.5M76.5 545.64H83.5M76.5 531.21H83.5M76.5 516.78H83.5M76.5 502.34H83.5M73.5 487.91H86.5M76.5 473.48H83.5M76.5 459.04H83.5M76.5 444.61H83.5M76.5 430.18H83.5M73.5 415.75H86.5M76.5 401.31H83.5M76.5 386.88H83.5M76.5 372.45H83.5M76.5 358.01H83.5M73.5 343.58H86.5M76.5 329.15H83.5M76.5 314.71H83.5M76.5 300.28H83.5M76.5 285.85H83.5M73.5 271.41H86.5M76.5 256.98H83.5M76.5 242.55H83.5M76.5 228.12H83.5M76.5 213.68H83.5M73.5 199.25H86.5M76.5 184.82H83.5M76.5 170.38H83.5M76.5 155.95H83.5M154.24 632.5V639.5M230 629.5V642.5M305.76 632.5V639.5M381.52 629.5V642.5M457.28 632.5V639.5M533.04 629.5V642.5M608.8 632.5V639.5M684.56 629.5V642.5M760.32 632.5V639.5M836.08 629.5V642.5M911.84 632.5V639.5M987.6 629.5V642.5" stroke="#1c1c1c" stroke-width="1" fill="none"/>
<g fill="#1e1e1e" font-size="12px">
<text x="62" y="636.64" text-anchor="end">5</text>
<text x="62" y="564.48" text-anchor="end">10</text>
<text x="62" y="492.31" text-anchor="end">15</text>
<text x="62" y="420.14" text-anchor="end">20</text>
<text x="62" y="347.98" text-anchor="end">25</text>
<text x="62" y="275.81" text-anchor="end">30</text>
<text x="62" y="203.65" text-anchor="end">35</text>
<text x="230.3" y="663.3" text-anchor="middle">3m20</text>
<text x="381.82" y="663.3" text-anchor="middle">6m40</text>
<text x="533.34" y="663.3" text-anchor="middle">10m00</text>
<text x="684.86" y="663.3" text-anchor="middle">13m20</text>
<text x="836.38" y="663.3" text-anchor="middle">16m40</text>
<text x="987.9" y="663.3" text-anchor="middle">20m00</text>
<text x="542.8" y="686.8" text-anchor="middle">Time (sec)</text>
<text transform="translate(38,394) rotate(-90)" text-anchor="middle">%</text>
</g>
<text x="543" y="127.6" text-anchor="middle" font-size="18.1px" letter-spacing="0.09" fill="#111">Total fuel trim (Bank 1) (%)</text>
</svg>
<div class="abs dither" style="left:10px;top:696px;width:1003px;height:17px"></div>
<div class="raised" style="left:10px;top:696px;width:17px;height:17px"></div>
<div class="raised" style="left:996px;top:696px;width:17px;height:17px"></div>
<svg class="abs" style="left:10px;top:696px" width="1003" height="17" viewBox="0 0 1003 17"><path d="M10 4.5v7L6 8z" fill="#505050"/><path d="M992.2 4.5v7l4-3.5z" fill="#505050"/></svg>
<div class="abs" style="left:0;top:724px;width:1024px;height:44px;background:#f0f0f0"></div><div class="abs" style="left:0;top:724px;width:1024px;height:3px;background:linear-gradient(#f8f8f8 0 1px,#fff 1px 2px,#f5f5f5 2px 3px)"></div>
<div class="raised" style="left:3px;top:729px;width:50px;height:37px"></div>
<svg class="abs" style="left:4px;top:735.6px" width="20" height="20" viewBox="0 0 20 20"><path d="M2.2 4.2c2-1.2 4-1.3 6.2-.2l-1.4 5.6c-2.1-1-4.1-1-6.1.2z" fill="#e8562a"/><path d="M9.6 4.6c2.100 1 4.100 1 6.100-.1l-1.400 5.600c-2 1.100-4 1.100-6.100.1z" fill="#7cb83e"/><path d="M.6 10.900c2-1.200 4-1.300 6.100-.2l-1.400 5.500c-2.100-1-4.100-1-6.100.2z" fill="#3f7fd0" transform="translate(0.300,0)"/><path d="M8 11.300c2.100 1 4.100 1 6.100-.1l-1.400 5.500c-2 1.100-4 1.100-6.100.1z" fill="#f7b91c"/></svg>
<div class="t" style="left:21.6px;top:739.9px;font-size:12px;font-weight:bold;letter-spacing:0.2px;-webkit-text-stroke:0">Пуск</div>
<div class="abs" style="left:60px;top:730px;width:2px;height:34px;background:#fcfcfc"></div>
<div class="abs" style="left:62px;top:730px;width:1px;height:34px;background:#a0a0a0"></div><div class="abs" style="left:60px;top:763px;width:3px;height:1px;background:#a0a0a0"></div>
<svg class="abs" style="left:72px;top:724px" width="48" height="44" viewBox="0 0 48 44"><defs><radialGradient id="ieg" cx="45%" cy="45%" r="60%"><stop offset="0" stop-color="#8fe6ff"/><stop offset=".55" stop-color="#4cc0f2"/><stop offset="1" stop-color="#1d7fcb"/></radialGradient></defs><path fill-rule="evenodd" fill="url(#ieg)" stroke="#2a78c0" stroke-width=".6" d="M24.300 9.300a13.600 13.600 0 1 0 12.900 17.900h-6.200q-2.300 3.300-6.700 3.300-5.300 0-6-5.800h19.500q.6-6.500-3.200-10.900-3.900-4.500-10.300-4.500zM18.300 20.300q.8-4.800 5.900-4.800 5 0 5.600 4.800z"/><path d="M13.900 37.300C8 36.200 7 29 12 21.500 17 14 26 7.600 33.500 7.300c3-.1 4.500 2.200 3.900 5.200" fill="none" stroke="#f3b822" stroke-width="2.5" stroke-linecap="round"/><path d="M12.700 35.500C9 33 9.500 27 13.500 21 18 14.500 26.500 8.700 33 8.300" fill="none" stroke="#ffe27a" stroke-width=".8" stroke-linecap="round"/></svg>
<div class="raised" style="left:121px;top:729px;width:49px;height:37px"></div>
<div class="raised" style="left:121px;top:729px;width:44px;height:37px"></div>
<svg class="abs" style="left:125px;top:732px" width="36" height="32" viewBox="0 0 36 32"><path d="M2.500 5.500q0-2 2-2h10q1.500 0 2 1.500l.5 1h13q2 0 2 2v19.500h-29.500z" fill="#f3dc8c" stroke="#d2a94a"/><rect x="5" y="2.500" width="3" height="2.500" fill="#3aa04a"/><rect x="13" y="4.500" width="3" height="2.500" fill="#d0552a"/><rect x="21" y="6.500" width="3" height="2.500" fill="#3b9bd0"/><path d="M2.500 10.500h29.500v17h-29.500z" fill="#f7e8a6" stroke="#d2a94a"/><path d="M6.500 29.500v-9q0-2.500 2.500-2.500h16q2.500 0 2.500 2.500v9h-6v-5h-9v5z" fill="#8ec9ee" stroke="#4f9fd6"/></svg>
<svg class="abs" style="left:178px;top:732px" width="36" height="32" viewBox="0 0 36 32"><path d="M27 6.500l3.500 1.500v19l-3.500 1.500z" fill="#a9d1f0" stroke="#78aee0" stroke-width=".8"/><rect x="3.500" y="4.500" width="23" height="24" fill="#9fcbf0" stroke="#5b9bdc"/><circle cx="14" cy="16.500" r="8.300" fill="#f08a24" stroke="#d86a10"/><path d="M11 11.500l8.500 5-8.500 5z" fill="#fff"/></svg>
<div class="raised" style="left:221px;top:729px;width:48px;height:37px"></div>
<svg class="abs" style="left:229px;top:731px" width="32" height="32" viewBox="0 0 32 32"><circle cx="16" cy="16" r="14.700" fill="#fff"/><path d="M16 16L3.270 8.650A14.700 14.700 0 0 1 28.730 8.650z" fill="#dc4b3e"/><path d="M16 16L28.730 8.650A14.700 14.700 0 0 1 16 30.700z" fill="#fbcf3d"/><path d="M16 16L16 30.700A14.700 14.700 0 0 1 3.270 8.650z" fill="#1f9d58"/><path d="M16 9.300h12.300" stroke="#dc4b3e" stroke-width="0"/><path d="M16 8.800H28.800A14.700 14.700 0 0 0 3.270 8.650L9.800 19.600z" fill="#dc4b3e"/><path d="M22.200 19.600L15.700 30.700A14.700 14.700 0 0 0 28.800 8.800H16z" fill="#fbcf3d"/><path d="M9.800 19.600L3.270 8.650A14.700 14.700 0 0 0 15.700 30.700L22.200 19.600z" fill="#1f9d58"/><circle cx="16" cy="16" r="7.200" fill="#fff"/><circle cx="16" cy="16" r="5.700" fill="#4a8af4"/></svg>
<div class="abs" style="left:271px;top:729px;width:48px;height:37px;box-sizing:border-box;border:1px solid;border-color:#696969 #fff #fff #696969;background:#f0f0f0"></div>
<div class="abs" style="left:271px;top:729px;width:44px;height:37px;box-sizing:border-box;border:1px solid;border-color:#696969 #fff #fff #696969;box-shadow:inset 1px 1px 0 #a0a0a0;background:#fdfdfd"></div>
<div class="abs" style="left:279.6px;top:733.2px;height:28px;line-height:28px;font-size:23px;font-weight:bold;color:#2200d4;white-space:nowrap;transform-origin:0 0;transform:scaleX(.9)">SZ</div>
<div class="abs" style="left:823px;top:730px;width:2px;height:34px;background:#fcfcfc"></div>
<div class="abs" style="left:825px;top:730px;width:1px;height:34px;background:#a0a0a0"></div><div class="abs" style="left:823px;top:763px;width:3px;height:1px;background:#a0a0a0"></div>
<div class="t" style="left:834.6px;top:737.6px;font-size:12px;letter-spacing:-1.1px;-webkit-text-stroke:0.3px #000">RU</div>
<div class="abs" style="left:854px;top:734px;width:1px;height:22px;background:#a0a0a0"></div>
<div class="sunken" style="left:858px;top:728px;width:164px;height:38px"></div>
<svg class="abs" style="left:864px;top:737px" width="70" height="20" viewBox="0 0 70 20"><path d="M1.500 7.500h2.500l4-4v13l-4-4h-2.500z" fill="#f4f4f4" stroke="#8a8a8a"/><circle cx="12" cy="13" r="4.200" fill="#fff" stroke="#d42020" stroke-width="1.700"/><path d="M9.200 10.200l5.600 5.600" stroke="#d42020" stroke-width="1.700"/><path d="M25.500 12.500h2v3h-2zM29.500 10.500h2v5h-2zM33.500 7.500h2v8h-2zM37.500 4.500h2v11h-2zM25.500 15.500h15" fill="#fff" stroke="#8a8a8a"/><path d="M50.500 2.500v15" stroke="#8a8a8a" stroke-width="2"/><path d="M51.500 3.500c3-1.500 5 1.500 8.500 0l2.500 0-1 7c-3.500 1.500-6-1.500-10 0z" fill="#f8f8f8" stroke="#8a8a8a"/><circle cx="60" cy="13.500" r="4.500" fill="#d83030"/><path d="M57.800 11.300l4.400 4.400M62.200 11.300l-4.400 4.400" stroke="#fff" stroke-width="1.500"/></svg>
<div class="t" style="left:939.2px;top:731.9px;width:60px;text-align:center;font-size:12px;transform:scaleX(.9)">2:48</div>
<div class="t" style="left:939.8px;top:748.6px;width:60px;text-align:center;font-size:12px;transform:scaleX(.915)">28.11.2018</div>
<svg class="abs" style="left:1003px;top:740px" width="18" height="14" viewBox="0 0 18 14"><defs><linearGradient id="sdg" x1="0" y1="0" x2="1" y2="1"><stop offset="0" stop-color="#2a5fc0"/><stop offset="1" stop-color="#5b9be8"/></linearGradient></defs><rect x="1" y="1" width="16" height="12" fill="url(#sdg)"/><rect x="1" y="10.500" width="16" height="2.500" fill="#1c2f5c"/><rect x="1.500" y="9" width="3" height="2.500" fill="#9cc4f0"/></svg>
</body></html>
